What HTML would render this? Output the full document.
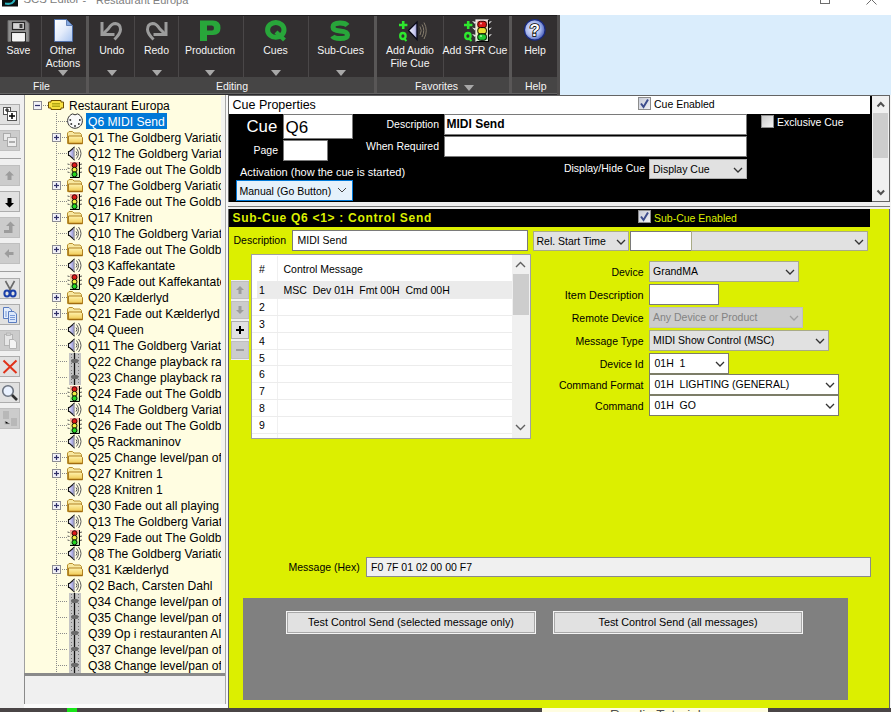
<!DOCTYPE html>
<html><head><meta charset="utf-8">
<style>
*{box-sizing:border-box;margin:0;padding:0}
html,body{width:891px;height:712px;overflow:hidden;background:#fff;font-family:"Liberation Sans",sans-serif;position:relative}
.a{position:absolute}
.t{position:absolute;white-space:pre;line-height:1}
svg{overflow:visible}
</style></head><body>

<div class="a" style="left:0px;top:0px;width:891px;height:15px;background:#fff"></div>
<div class="t" style="left:23.5px;top:-5.57px;font-size:11.3px;color:#808080;font-weight:normal;">SCS Editor</div>
<div class="t" style="left:82.5px;top:-5.31px;font-size:11px;color:#808080;font-weight:normal;">-</div>
<div class="t" style="left:96px;top:-5.31px;font-size:11px;color:#808080;font-weight:normal;">Restaurant Europa</div>
<svg class="a" style="left:2px;top:0px" width="16" height="7" viewBox="0 0 16 7"><rect x="0" y="-2" width="16" height="8.5" fill="#0c0f10"/><path d="M3,3.5 Q12,5 12.5,-1" stroke="#2bb3bf" stroke-width="2.2" fill="none"/></svg>
<div class="a" style="left:820px;top:-6px;width:10px;height:10px;border:1px solid #6d6d6d"></div>
<svg class="a" style="left:866px;top:0px" width="12" height="5" viewBox="0 0 12 5"><path d="M0.5,4.5 L5,0 M6,0 L10.5,4.5" stroke="#6d6d6d" stroke-width="1" fill="none"/></svg>
<div class="a" style="left:560px;top:15px;width:331px;height:80px;background:#daedfc"></div>
<div class="a" style="left:0px;top:15px;width:560px;height:80px;background:#322f30"></div>
<div class="a" style="left:0px;top:15px;width:560px;height:1px;background:#1f1d1e"></div>
<div class="a" style="left:0px;top:77px;width:560px;height:16px;background:#464545"></div>
<div class="a" style="left:0px;top:93px;width:560px;height:1px;background:#646464"></div>
<div class="a" style="left:0px;top:94px;width:560px;height:1px;background:#2b2a2e"></div>
<div class="a" style="left:41px;top:16px;width:1px;height:61px;background:#4a4748"></div>
<div class="a" style="left:134px;top:16px;width:1px;height:61px;background:#4a4748"></div>
<div class="a" style="left:178px;top:16px;width:1px;height:61px;background:#4a4748"></div>
<div class="a" style="left:243px;top:16px;width:1px;height:61px;background:#4a4748"></div>
<div class="a" style="left:308px;top:16px;width:1px;height:61px;background:#4a4748"></div>
<div class="a" style="left:443px;top:16px;width:1px;height:61px;background:#4a4748"></div>
<div class="a" style="left:86px;top:16px;width:3px;height:77px;background:#595757"></div>
<div class="a" style="left:374px;top:16px;width:3px;height:77px;background:#595757"></div>
<div class="a" style="left:509px;top:16px;width:3px;height:77px;background:#595757"></div>
<div class="a" style="left:557px;top:15px;width:3px;height:80px;background:#4f4d4d"></div>
<div class="t" style="left:-181.5px;width:400px;text-align:center;top:44.81px;font-size:10.5px;color:#f4f4f4;font-weight:normal;">Save</div>
<div class="t" style="left:-137px;width:400px;text-align:center;top:44.81px;font-size:10.5px;color:#f4f4f4;font-weight:normal;">Other</div>
<div class="t" style="left:-137px;width:400px;text-align:center;top:57.61px;font-size:10.5px;color:#f4f4f4;font-weight:normal;">Actions</div>
<div class="a" style="left:58px;top:70px;width:0;height:0;border-left:5px solid transparent;border-right:5px solid transparent;border-top:6px solid #a8a8a8"></div>
<div class="t" style="left:-88.2px;width:400px;text-align:center;top:44.81px;font-size:10.5px;color:#f4f4f4;font-weight:normal;">Undo</div>
<div class="a" style="left:107px;top:70px;width:0;height:0;border-left:5px solid transparent;border-right:5px solid transparent;border-top:6px solid #a8a8a8"></div>
<div class="t" style="left:-43.5px;width:400px;text-align:center;top:44.81px;font-size:10.5px;color:#f4f4f4;font-weight:normal;">Redo</div>
<div class="a" style="left:152px;top:70px;width:0;height:0;border-left:5px solid transparent;border-right:5px solid transparent;border-top:6px solid #a8a8a8"></div>
<div class="t" style="left:10px;width:400px;text-align:center;top:44.81px;font-size:10.5px;color:#f4f4f4;font-weight:normal;">Production</div>
<div class="a" style="left:205px;top:70px;width:0;height:0;border-left:5px solid transparent;border-right:5px solid transparent;border-top:6px solid #a8a8a8"></div>
<div class="t" style="left:75.5px;width:400px;text-align:center;top:44.81px;font-size:10.5px;color:#f4f4f4;font-weight:normal;">Cues</div>
<div class="a" style="left:271px;top:70px;width:0;height:0;border-left:5px solid transparent;border-right:5px solid transparent;border-top:6px solid #a8a8a8"></div>
<div class="t" style="left:140.60000000000002px;width:400px;text-align:center;top:44.81px;font-size:10.5px;color:#f4f4f4;font-weight:normal;">Sub-Cues</div>
<div class="a" style="left:336px;top:70px;width:0;height:0;border-left:5px solid transparent;border-right:5px solid transparent;border-top:6px solid #a8a8a8"></div>
<div class="t" style="left:210px;width:400px;text-align:center;top:44.81px;font-size:10.5px;color:#f4f4f4;font-weight:normal;">Add Audio</div>
<div class="t" style="left:210px;width:400px;text-align:center;top:58.11px;font-size:10.5px;color:#f4f4f4;font-weight:normal;">File Cue</div>
<div class="t" style="left:275px;width:400px;text-align:center;top:44.81px;font-size:10.5px;color:#f4f4f4;font-weight:normal;">Add SFR Cue</div>
<div class="t" style="left:335px;width:400px;text-align:center;top:44.81px;font-size:10.5px;color:#f4f4f4;font-weight:normal;">Help</div>
<div class="t" style="left:-158.5px;width:400px;text-align:center;top:80.81px;font-size:10.5px;color:#f4f4f4;font-weight:normal;">File</div>
<div class="t" style="left:32px;width:400px;text-align:center;top:80.81px;font-size:10.5px;color:#f4f4f4;font-weight:normal;">Editing</div>
<div class="t" style="left:236.5px;width:400px;text-align:center;top:80.81px;font-size:10.5px;color:#f4f4f4;font-weight:normal;">Favorites</div>
<div class="a" style="left:464px;top:85px;width:0;height:0;border-left:5px solid transparent;border-right:5px solid transparent;border-top:6px solid #a8a8a8"></div>
<div class="t" style="left:335.70000000000005px;width:400px;text-align:center;top:80.81px;font-size:10.5px;color:#f4f4f4;font-weight:normal;">Help</div>
<svg class="a" style="left:7px;top:20px" width="23" height="22" viewBox="0 0 23 22"><path d="M1,0.5 H19 L22,3.5 V21.5 H1 Z" fill="#8e8e8e" stroke="#6e6e6e"/>
<rect x="5.5" y="2.5" width="12" height="7" fill="#d4d4d4" stroke="#262626" stroke-width="1.2"/>
<rect x="12.5" y="4" width="3" height="4" fill="#3a3a3a"/>
<rect x="4.5" y="12.5" width="14" height="9" fill="#e4e4e4" stroke="#2a2a2a" stroke-width="1"/>
<rect x="5.5" y="13.5" width="12" height="8" fill="#f4f4f4"/></svg>
<svg class="a" style="left:54px;top:19px" width="19" height="23" viewBox="0 0 19 23"><defs><linearGradient id="dg" x1="0" y1="0" x2="1" y2="1"><stop offset="0" stop-color="#ffffff"/><stop offset="0.5" stop-color="#e4ecfb"/><stop offset="1" stop-color="#a8c4f0"/></linearGradient></defs>
<path d="M0.5,0.5 H12.5 L18.5,6.5 V22.5 H0.5 Z" fill="url(#dg)" stroke="#4f6fa8" stroke-width="1"/>
<path d="M12.5,0.5 V6.5 H18.5 Z" fill="#86a9e0" stroke="#4f6fa8" stroke-width="0.8"/></svg>
<svg class="a" style="left:95px;top:17px" width="80" height="28" viewBox="0 0 80 28"><path d="M7,6.5 V17.5 H18" stroke="#9c9c9c" stroke-width="3" fill="none" stroke-linecap="square"/><path d="M8,17 L13.5,11.5 Q16.5,6.5 20.5,6.5 Q25.5,7 25.5,12.5 Q25.5,16.5 19.5,22.5" stroke="#9c9c9c" stroke-width="3" fill="none"/></svg>
<svg class="a" style="left:133px;top:17px" width="80" height="28" viewBox="0 0 80 28"><path d="M33,6.5 V17.5 H22" stroke="#9c9c9c" stroke-width="3" fill="none" stroke-linecap="square"/><path d="M32,17 L26.5,11.5 Q23.5,6.5 19.5,6.5 Q14.5,7 14.5,12.5 Q14.5,16.5 20.5,22.5" stroke="#9c9c9c" stroke-width="3" fill="none"/></svg>
<svg class="a" style="left:200px;top:20px" width="21" height="22" viewBox="0 0 21 22"><path fill-rule="evenodd" fill="#28a63a" d="M0,0.5 H13 Q20.5,0.5 20.5,8 Q20.5,15 13,15 H7 V21 H0 Z M7,5.5 H12 Q14,5.5 14,8 Q14,10.5 12,10.5 H7 Z"/></svg>
<svg class="a" style="left:265px;top:20px" width="23" height="22" viewBox="0 0 23 22"><ellipse cx="10.8" cy="9.9" rx="8.2" ry="7.4" fill="none" stroke="#28a63a" stroke-width="5"/><path d="M11,12 L19.5,20" stroke="#28a63a" stroke-width="4.2"/></svg>
<svg class="a" style="left:330px;top:20px" width="21" height="22" viewBox="0 0 21 22"><path d="M17.5,5.5 Q15.5,3 10,3 Q3,3 3,7 Q3,10.5 10,11 Q17.5,11.5 17.5,15 Q17.5,18.5 10,18.5 Q4,18.5 2.5,16" fill="none" stroke="#28a63a" stroke-width="5"/></svg>
<svg class="a" style="left:399px;top:21px" width="9" height="21" viewBox="0 0 9 21"><path d="M4.2,0 V8 M0,4 H8.4" stroke="#2ee82e" stroke-width="2.6"/><ellipse cx="3.9" cy="15" rx="2.7" ry="3" fill="none" stroke="#2ee82e" stroke-width="2.3"/><path d="M4.5,17 L7.5,20" stroke="#2ee82e" stroke-width="2"/></svg>
<svg class="a" style="left:407px;top:21px" width="22" height="20" viewBox="0 0 22 20"><defs><linearGradient id="sg" x1="0" y1="0" x2="1" y2="0"><stop offset="0" stop-color="#f4f4ff"/><stop offset="0.7" stop-color="#c8c8f0"/><stop offset="1" stop-color="#8888c0"/></linearGradient></defs>
<path d="M1.5,9.5 L10,1 V18.5 Z" fill="url(#sg)" stroke="#0a0a1a" stroke-width="1.3"/>
<path d="M13,5.5 Q15.5,9.5 13,14 M15,3.5 Q18.5,9.5 15,16 M17,1.5 Q21.5,9.5 17,18" stroke="#857c6c" stroke-width="1" fill="none"/></svg>
<svg class="a" style="left:464px;top:21px" width="9" height="21" viewBox="0 0 9 21"><path d="M4.2,0 V8 M0,4 H8.4" stroke="#2ee82e" stroke-width="2.6"/><ellipse cx="3.9" cy="15" rx="2.7" ry="3" fill="none" stroke="#2ee82e" stroke-width="2.3"/><path d="M4.5,17 L7.5,20" stroke="#2ee82e" stroke-width="2"/></svg>
<svg class="a" style="left:472px;top:19px" width="20" height="23" viewBox="0 0 20 23"><defs><linearGradient id="tlb" x1="0" y1="0" x2="0" y2="1"><stop offset="0" stop-color="#f0b0b0"/><stop offset="0.5" stop-color="#f0f0a8"/><stop offset="1" stop-color="#a8e8a8"/></linearGradient></defs>
<path d="M0,2 L4,3 L3,5 Z M0,8.5 L4,9.5 L3,11.5 Z M0,15 L4,16 L3,18 Z M20,2 L16,3 L17,5 Z M20,8.5 L16,9.5 L17,11.5 Z M20,15 L16,16 L17,18 Z" fill="#e8e8e8"/>
<rect x="4" y="1" width="12" height="21" fill="url(#tlb)" stroke="#f4f4f4" stroke-width="1.2"/>
<path d="M16.5,1 V22.5 H4.5" stroke="#000" stroke-width="1.2" fill="none"/>
<rect x="5.8" y="2.3" width="8.6" height="6.4" rx="2.5" fill="#d81818" stroke="#300" stroke-width="1"/>
<rect x="5.8" y="8.6" width="8.6" height="6.4" rx="2.5" fill="#e8e030" stroke="#000" stroke-width="1"/>
<rect x="5.8" y="14.9" width="8.6" height="6.4" rx="2.5" fill="#20c830" stroke="#000" stroke-width="1"/>
<circle cx="9" cy="4.5" r="0.9" fill="#ffb0b0"/><circle cx="9" cy="17" r="0.9" fill="#b0ffb0"/></svg>
<svg class="a" style="left:523px;top:19px" width="24" height="23" viewBox="0 0 24 23"><defs><radialGradient id="hg" cx="0.42" cy="0.45" r="0.65"><stop offset="0" stop-color="#f0f2ff"/><stop offset="0.55" stop-color="#a8b8ec"/><stop offset="1" stop-color="#2a42a8"/></radialGradient></defs>
<circle cx="11.8" cy="10.9" r="10.3" fill="url(#hg)" stroke="#18287a" stroke-width="1.2"/></svg>
<div class="t" style="left:529.5px;top:21.5px;font-size:17px;font-weight:bold;color:#fff;-webkit-text-stroke:1.6px #000;paint-order:stroke fill">?</div>
<div class="a" style="left:0px;top:95px;width:24px;height:613px;background:#f0f0f0"></div>
<div class="a" style="left:0px;top:104px;width:20px;height:21px;background:#e1e1e1;border:1px solid #adadad;border-left:none"></div>
<div class="a" style="left:0px;top:130px;width:20px;height:21px;background:#cccccc;border:1px solid #bfbfbf;border-left:none"></div>
<div class="a" style="left:0px;top:158px;width:21px;height:1px;background:#a0a0a0"></div>
<div class="a" style="left:0px;top:165px;width:20px;height:21px;background:#cccccc;border:1px solid #bfbfbf;border-left:none"></div>
<div class="a" style="left:0px;top:191px;width:20px;height:21px;background:#e1e1e1;border:1px solid #adadad;border-left:none"></div>
<div class="a" style="left:0px;top:217px;width:20px;height:21px;background:#cccccc;border:1px solid #bfbfbf;border-left:none"></div>
<div class="a" style="left:0px;top:243px;width:20px;height:21px;background:#cccccc;border:1px solid #bfbfbf;border-left:none"></div>
<div class="a" style="left:0px;top:271px;width:21px;height:1px;background:#a0a0a0"></div>
<div class="a" style="left:0px;top:278px;width:20px;height:21px;background:#e1e1e1;border:1px solid #adadad;border-left:none"></div>
<div class="a" style="left:0px;top:304px;width:20px;height:21px;background:#e1e1e1;border:1px solid #adadad;border-left:none"></div>
<div class="a" style="left:0px;top:330px;width:20px;height:21px;background:#cccccc;border:1px solid #bfbfbf;border-left:none"></div>
<div class="a" style="left:0px;top:356px;width:20px;height:21px;background:#e1e1e1;border:1px solid #adadad;border-left:none"></div>
<div class="a" style="left:0px;top:382px;width:20px;height:21px;background:#e1e1e1;border:1px solid #adadad;border-left:none"></div>
<div class="a" style="left:0px;top:408px;width:20px;height:21px;background:#cccccc;border:1px solid #bfbfbf;border-left:none"></div>
<svg class="a" style="left:2px;top:106px" width="16" height="16" viewBox="0 0 16 16"><rect x="1.5" y="1.5" width="7" height="7" fill="#fff" stroke="#555"/><rect x="5.5" y="5.5" width="9" height="9" fill="#fff" stroke="#555"/><path d="M3,4 H7 M5,2 V6" stroke="#000"/><path d="M7,10 H13 M10,7 V13" stroke="#000" stroke-width="1.5"/></svg>
<svg class="a" style="left:2px;top:132px" width="16" height="16" viewBox="0 0 16 16"><rect x="1.5" y="1.5" width="7" height="7" fill="#e8e8e8" stroke="#aaa"/><rect x="5.5" y="5.5" width="9" height="9" fill="#eee" stroke="#aaa"/><path d="M7,10 H13" stroke="#999" stroke-width="1.5"/></svg>
<svg class="a" style="left:0px;top:160px" width="24" height="110" viewBox="0 0 24 110"><path d="M9.5,11 L14,15.5 H11.5 V20 H7.5 V15.5 H5 Z" fill="#9c9c9c"/><path d="M9.5,47.5 L14,43 H11.5 V38 H7.5 V43 H5 Z" fill="#000"/><path d="M10.5,61.5 L15,66 H12.5 V73 H4 V70 H9 V66 H6 Z" fill="#9c9c9c"/><path d="M4.5,93.5 L9,89 V92 H13.5 V95 H9 V98 Z" fill="#9c9c9c"/></svg>
<svg class="a" style="left:2px;top:280px" width="16" height="18" viewBox="0 0 16 18"><path d="M3.5,1 L9,11 M12.5,1 L7,11" stroke="#6a6a6a" stroke-width="1.6"/><ellipse cx="5" cy="13.5" rx="2.6" ry="3" fill="none" stroke="#1a3fa8" stroke-width="2"/><ellipse cx="11" cy="13.5" rx="2.6" ry="3" fill="none" stroke="#1a3fa8" stroke-width="2"/></svg>
<svg class="a" style="left:2px;top:306px" width="16" height="18" viewBox="0 0 16 18"><path d="M1.5,1.5 H7 L9.5,4 V12.5 H1.5 Z" fill="#e4eefc" stroke="#5a7cc0"/><path d="M6.5,5.5 H12 L14.5,8 V16.5 H6.5 Z" fill="#dbe7fb" stroke="#5a7cc0"/><path d="M8,9.5 H13 M8,11.5 H13 M8,13.5 H13 M3,6 H5 M3,8 H5 M3,10 H5" stroke="#7a9ad8"/></svg>
<svg class="a" style="left:2px;top:332px" width="16" height="18" viewBox="0 0 16 18"><rect x="2.5" y="2.5" width="8" height="11" fill="#e6e6e6" stroke="#b4b4b4"/><rect x="4.5" y="1" width="4" height="2.5" fill="#d0d0d0" stroke="#b4b4b4" stroke-width="0.8"/><path d="M7.5,7.5 H12 L14.5,10 V16.5 H7.5 Z" fill="#f4f4f4" stroke="#b4b4b4"/></svg>
<svg class="a" style="left:2px;top:358px" width="16" height="18" viewBox="0 0 16 18"><path d="M1.5,2.5 L14.5,15 M14.5,2.5 L1.5,15" stroke="#e0321a" stroke-width="2"/></svg>
<svg class="a" style="left:1px;top:384px" width="18" height="18" viewBox="0 0 18 18"><circle cx="7" cy="7" r="5.3" fill="#eaf2ff" stroke="#6c7480" stroke-width="1.6"/><path d="M11,11 L16,16" stroke="#303030" stroke-width="2.6"/></svg>
<svg class="a" style="left:2px;top:410px" width="16" height="18" viewBox="0 0 16 18"><rect x="1" y="1" width="6" height="8" fill="#b8b8b8"/><rect x="9" y="8" width="6" height="8" fill="#b8b8b8"/><path d="M3,11 V14 H8" stroke="#b8b8b8" stroke-width="1.2"/></svg>
<div class="a" style="left:24px;top:95px;width:201px;height:579px;background:#fffde1;border-left:1px solid #a0a0a0"></div>
<div class="a" style="left:221px;top:96px;width:4px;height:577px;background:#f4f4f0"></div>
<div class="a" style="left:225px;top:95px;width:1px;height:613px;background:#a8a8a8"></div>
<div class="a" style="left:226px;top:95px;width:2px;height:613px;background:#f7f7f7"></div>
<div class="a" style="left:24px;top:673px;width:201px;height:3px;background:#8a8a8a"></div>
<div class="a" style="left:24px;top:676px;width:201px;height:28px;background:#f0f0f0;border-left:1px solid #8a8a8a"></div>
<div class="a" style="left:24px;top:704px;width:204px;height:4px;background:#fbfbfb"></div>
<div class="a" style="left:0px;top:708px;width:891px;height:4px;background:#4a4546"></div>
<div class="a" style="left:67px;top:708px;width:10px;height:4px;background:#19e619"></div>
<div class="a" style="left:25px;top:96px;width:196px;height:577px;overflow:hidden">
<svg class="a" style="left:0;top:0" width="196" height="577"><rect x="31" y="17" width="1" height="1" fill="#8a8a8a"/><rect x="31" y="19" width="1" height="1" fill="#8a8a8a"/><rect x="31" y="21" width="1" height="1" fill="#8a8a8a"/><rect x="31" y="23" width="1" height="1" fill="#8a8a8a"/><rect x="31" y="25" width="1" height="1" fill="#8a8a8a"/><rect x="31" y="27" width="1" height="1" fill="#8a8a8a"/><rect x="31" y="29" width="1" height="1" fill="#8a8a8a"/><rect x="31" y="31" width="1" height="1" fill="#8a8a8a"/><rect x="31" y="33" width="1" height="1" fill="#8a8a8a"/><rect x="31" y="35" width="1" height="1" fill="#8a8a8a"/><rect x="31" y="37" width="1" height="1" fill="#8a8a8a"/><rect x="31" y="39" width="1" height="1" fill="#8a8a8a"/><rect x="31" y="41" width="1" height="1" fill="#8a8a8a"/><rect x="31" y="43" width="1" height="1" fill="#8a8a8a"/><rect x="31" y="45" width="1" height="1" fill="#8a8a8a"/><rect x="31" y="47" width="1" height="1" fill="#8a8a8a"/><rect x="31" y="49" width="1" height="1" fill="#8a8a8a"/><rect x="31" y="51" width="1" height="1" fill="#8a8a8a"/><rect x="31" y="53" width="1" height="1" fill="#8a8a8a"/><rect x="31" y="55" width="1" height="1" fill="#8a8a8a"/><rect x="31" y="57" width="1" height="1" fill="#8a8a8a"/><rect x="31" y="59" width="1" height="1" fill="#8a8a8a"/><rect x="31" y="61" width="1" height="1" fill="#8a8a8a"/><rect x="31" y="63" width="1" height="1" fill="#8a8a8a"/><rect x="31" y="65" width="1" height="1" fill="#8a8a8a"/><rect x="31" y="67" width="1" height="1" fill="#8a8a8a"/><rect x="31" y="69" width="1" height="1" fill="#8a8a8a"/><rect x="31" y="71" width="1" height="1" fill="#8a8a8a"/><rect x="31" y="73" width="1" height="1" fill="#8a8a8a"/><rect x="31" y="75" width="1" height="1" fill="#8a8a8a"/><rect x="31" y="77" width="1" height="1" fill="#8a8a8a"/><rect x="31" y="79" width="1" height="1" fill="#8a8a8a"/><rect x="31" y="81" width="1" height="1" fill="#8a8a8a"/><rect x="31" y="83" width="1" height="1" fill="#8a8a8a"/><rect x="31" y="85" width="1" height="1" fill="#8a8a8a"/><rect x="31" y="87" width="1" height="1" fill="#8a8a8a"/><rect x="31" y="89" width="1" height="1" fill="#8a8a8a"/><rect x="31" y="91" width="1" height="1" fill="#8a8a8a"/><rect x="31" y="93" width="1" height="1" fill="#8a8a8a"/><rect x="31" y="95" width="1" height="1" fill="#8a8a8a"/><rect x="31" y="97" width="1" height="1" fill="#8a8a8a"/><rect x="31" y="99" width="1" height="1" fill="#8a8a8a"/><rect x="31" y="101" width="1" height="1" fill="#8a8a8a"/><rect x="31" y="103" width="1" height="1" fill="#8a8a8a"/><rect x="31" y="105" width="1" height="1" fill="#8a8a8a"/><rect x="31" y="107" width="1" height="1" fill="#8a8a8a"/><rect x="31" y="109" width="1" height="1" fill="#8a8a8a"/><rect x="31" y="111" width="1" height="1" fill="#8a8a8a"/><rect x="31" y="113" width="1" height="1" fill="#8a8a8a"/><rect x="31" y="115" width="1" height="1" fill="#8a8a8a"/><rect x="31" y="117" width="1" height="1" fill="#8a8a8a"/><rect x="31" y="119" width="1" height="1" fill="#8a8a8a"/><rect x="31" y="121" width="1" height="1" fill="#8a8a8a"/><rect x="31" y="123" width="1" height="1" fill="#8a8a8a"/><rect x="31" y="125" width="1" height="1" fill="#8a8a8a"/><rect x="31" y="127" width="1" height="1" fill="#8a8a8a"/><rect x="31" y="129" width="1" height="1" fill="#8a8a8a"/><rect x="31" y="131" width="1" height="1" fill="#8a8a8a"/><rect x="31" y="133" width="1" height="1" fill="#8a8a8a"/><rect x="31" y="135" width="1" height="1" fill="#8a8a8a"/><rect x="31" y="137" width="1" height="1" fill="#8a8a8a"/><rect x="31" y="139" width="1" height="1" fill="#8a8a8a"/><rect x="31" y="141" width="1" height="1" fill="#8a8a8a"/><rect x="31" y="143" width="1" height="1" fill="#8a8a8a"/><rect x="31" y="145" width="1" height="1" fill="#8a8a8a"/><rect x="31" y="147" width="1" height="1" fill="#8a8a8a"/><rect x="31" y="149" width="1" height="1" fill="#8a8a8a"/><rect x="31" y="151" width="1" height="1" fill="#8a8a8a"/><rect x="31" y="153" width="1" height="1" fill="#8a8a8a"/><rect x="31" y="155" width="1" height="1" fill="#8a8a8a"/><rect x="31" y="157" width="1" height="1" fill="#8a8a8a"/><rect x="31" y="159" width="1" height="1" fill="#8a8a8a"/><rect x="31" y="161" width="1" height="1" fill="#8a8a8a"/><rect x="31" y="163" width="1" height="1" fill="#8a8a8a"/><rect x="31" y="165" width="1" height="1" fill="#8a8a8a"/><rect x="31" y="167" width="1" height="1" fill="#8a8a8a"/><rect x="31" y="169" width="1" height="1" fill="#8a8a8a"/><rect x="31" y="171" width="1" height="1" fill="#8a8a8a"/><rect x="31" y="173" width="1" height="1" fill="#8a8a8a"/><rect x="31" y="175" width="1" height="1" fill="#8a8a8a"/><rect x="31" y="177" width="1" height="1" fill="#8a8a8a"/><rect x="31" y="179" width="1" height="1" fill="#8a8a8a"/><rect x="31" y="181" width="1" height="1" fill="#8a8a8a"/><rect x="31" y="183" width="1" height="1" fill="#8a8a8a"/><rect x="31" y="185" width="1" height="1" fill="#8a8a8a"/><rect x="31" y="187" width="1" height="1" fill="#8a8a8a"/><rect x="31" y="189" width="1" height="1" fill="#8a8a8a"/><rect x="31" y="191" width="1" height="1" fill="#8a8a8a"/><rect x="31" y="193" width="1" height="1" fill="#8a8a8a"/><rect x="31" y="195" width="1" height="1" fill="#8a8a8a"/><rect x="31" y="197" width="1" height="1" fill="#8a8a8a"/><rect x="31" y="199" width="1" height="1" fill="#8a8a8a"/><rect x="31" y="201" width="1" height="1" fill="#8a8a8a"/><rect x="31" y="203" width="1" height="1" fill="#8a8a8a"/><rect x="31" y="205" width="1" height="1" fill="#8a8a8a"/><rect x="31" y="207" width="1" height="1" fill="#8a8a8a"/><rect x="31" y="209" width="1" height="1" fill="#8a8a8a"/><rect x="31" y="211" width="1" height="1" fill="#8a8a8a"/><rect x="31" y="213" width="1" height="1" fill="#8a8a8a"/><rect x="31" y="215" width="1" height="1" fill="#8a8a8a"/><rect x="31" y="217" width="1" height="1" fill="#8a8a8a"/><rect x="31" y="219" width="1" height="1" fill="#8a8a8a"/><rect x="31" y="221" width="1" height="1" fill="#8a8a8a"/><rect x="31" y="223" width="1" height="1" fill="#8a8a8a"/><rect x="31" y="225" width="1" height="1" fill="#8a8a8a"/><rect x="31" y="227" width="1" height="1" fill="#8a8a8a"/><rect x="31" y="229" width="1" height="1" fill="#8a8a8a"/><rect x="31" y="231" width="1" height="1" fill="#8a8a8a"/><rect x="31" y="233" width="1" height="1" fill="#8a8a8a"/><rect x="31" y="235" width="1" height="1" fill="#8a8a8a"/><rect x="31" y="237" width="1" height="1" fill="#8a8a8a"/><rect x="31" y="239" width="1" height="1" fill="#8a8a8a"/><rect x="31" y="241" width="1" height="1" fill="#8a8a8a"/><rect x="31" y="243" width="1" height="1" fill="#8a8a8a"/><rect x="31" y="245" width="1" height="1" fill="#8a8a8a"/><rect x="31" y="247" width="1" height="1" fill="#8a8a8a"/><rect x="31" y="249" width="1" height="1" fill="#8a8a8a"/><rect x="31" y="251" width="1" height="1" fill="#8a8a8a"/><rect x="31" y="253" width="1" height="1" fill="#8a8a8a"/><rect x="31" y="255" width="1" height="1" fill="#8a8a8a"/><rect x="31" y="257" width="1" height="1" fill="#8a8a8a"/><rect x="31" y="259" width="1" height="1" fill="#8a8a8a"/><rect x="31" y="261" width="1" height="1" fill="#8a8a8a"/><rect x="31" y="263" width="1" height="1" fill="#8a8a8a"/><rect x="31" y="265" width="1" height="1" fill="#8a8a8a"/><rect x="31" y="267" width="1" height="1" fill="#8a8a8a"/><rect x="31" y="269" width="1" height="1" fill="#8a8a8a"/><rect x="31" y="271" width="1" height="1" fill="#8a8a8a"/><rect x="31" y="273" width="1" height="1" fill="#8a8a8a"/><rect x="31" y="275" width="1" height="1" fill="#8a8a8a"/><rect x="31" y="277" width="1" height="1" fill="#8a8a8a"/><rect x="31" y="279" width="1" height="1" fill="#8a8a8a"/><rect x="31" y="281" width="1" height="1" fill="#8a8a8a"/><rect x="31" y="283" width="1" height="1" fill="#8a8a8a"/><rect x="31" y="285" width="1" height="1" fill="#8a8a8a"/><rect x="31" y="287" width="1" height="1" fill="#8a8a8a"/><rect x="31" y="289" width="1" height="1" fill="#8a8a8a"/><rect x="31" y="291" width="1" height="1" fill="#8a8a8a"/><rect x="31" y="293" width="1" height="1" fill="#8a8a8a"/><rect x="31" y="295" width="1" height="1" fill="#8a8a8a"/><rect x="31" y="297" width="1" height="1" fill="#8a8a8a"/><rect x="31" y="299" width="1" height="1" fill="#8a8a8a"/><rect x="31" y="301" width="1" height="1" fill="#8a8a8a"/><rect x="31" y="303" width="1" height="1" fill="#8a8a8a"/><rect x="31" y="305" width="1" height="1" fill="#8a8a8a"/><rect x="31" y="307" width="1" height="1" fill="#8a8a8a"/><rect x="31" y="309" width="1" height="1" fill="#8a8a8a"/><rect x="31" y="311" width="1" height="1" fill="#8a8a8a"/><rect x="31" y="313" width="1" height="1" fill="#8a8a8a"/><rect x="31" y="315" width="1" height="1" fill="#8a8a8a"/><rect x="31" y="317" width="1" height="1" fill="#8a8a8a"/><rect x="31" y="319" width="1" height="1" fill="#8a8a8a"/><rect x="31" y="321" width="1" height="1" fill="#8a8a8a"/><rect x="31" y="323" width="1" height="1" fill="#8a8a8a"/><rect x="31" y="325" width="1" height="1" fill="#8a8a8a"/><rect x="31" y="327" width="1" height="1" fill="#8a8a8a"/><rect x="31" y="329" width="1" height="1" fill="#8a8a8a"/><rect x="31" y="331" width="1" height="1" fill="#8a8a8a"/><rect x="31" y="333" width="1" height="1" fill="#8a8a8a"/><rect x="31" y="335" width="1" height="1" fill="#8a8a8a"/><rect x="31" y="337" width="1" height="1" fill="#8a8a8a"/><rect x="31" y="339" width="1" height="1" fill="#8a8a8a"/><rect x="31" y="341" width="1" height="1" fill="#8a8a8a"/><rect x="31" y="343" width="1" height="1" fill="#8a8a8a"/><rect x="31" y="345" width="1" height="1" fill="#8a8a8a"/><rect x="31" y="347" width="1" height="1" fill="#8a8a8a"/><rect x="31" y="349" width="1" height="1" fill="#8a8a8a"/><rect x="31" y="351" width="1" height="1" fill="#8a8a8a"/><rect x="31" y="353" width="1" height="1" fill="#8a8a8a"/><rect x="31" y="355" width="1" height="1" fill="#8a8a8a"/><rect x="31" y="357" width="1" height="1" fill="#8a8a8a"/><rect x="31" y="359" width="1" height="1" fill="#8a8a8a"/><rect x="31" y="361" width="1" height="1" fill="#8a8a8a"/><rect x="31" y="363" width="1" height="1" fill="#8a8a8a"/><rect x="31" y="365" width="1" height="1" fill="#8a8a8a"/><rect x="31" y="367" width="1" height="1" fill="#8a8a8a"/><rect x="31" y="369" width="1" height="1" fill="#8a8a8a"/><rect x="31" y="371" width="1" height="1" fill="#8a8a8a"/><rect x="31" y="373" width="1" height="1" fill="#8a8a8a"/><rect x="31" y="375" width="1" height="1" fill="#8a8a8a"/><rect x="31" y="377" width="1" height="1" fill="#8a8a8a"/><rect x="31" y="379" width="1" height="1" fill="#8a8a8a"/><rect x="31" y="381" width="1" height="1" fill="#8a8a8a"/><rect x="31" y="383" width="1" height="1" fill="#8a8a8a"/><rect x="31" y="385" width="1" height="1" fill="#8a8a8a"/><rect x="31" y="387" width="1" height="1" fill="#8a8a8a"/><rect x="31" y="389" width="1" height="1" fill="#8a8a8a"/><rect x="31" y="391" width="1" height="1" fill="#8a8a8a"/><rect x="31" y="393" width="1" height="1" fill="#8a8a8a"/><rect x="31" y="395" width="1" height="1" fill="#8a8a8a"/><rect x="31" y="397" width="1" height="1" fill="#8a8a8a"/><rect x="31" y="399" width="1" height="1" fill="#8a8a8a"/><rect x="31" y="401" width="1" height="1" fill="#8a8a8a"/><rect x="31" y="403" width="1" height="1" fill="#8a8a8a"/><rect x="31" y="405" width="1" height="1" fill="#8a8a8a"/><rect x="31" y="407" width="1" height="1" fill="#8a8a8a"/><rect x="31" y="409" width="1" height="1" fill="#8a8a8a"/><rect x="31" y="411" width="1" height="1" fill="#8a8a8a"/><rect x="31" y="413" width="1" height="1" fill="#8a8a8a"/><rect x="31" y="415" width="1" height="1" fill="#8a8a8a"/><rect x="31" y="417" width="1" height="1" fill="#8a8a8a"/><rect x="31" y="419" width="1" height="1" fill="#8a8a8a"/><rect x="31" y="421" width="1" height="1" fill="#8a8a8a"/><rect x="31" y="423" width="1" height="1" fill="#8a8a8a"/><rect x="31" y="425" width="1" height="1" fill="#8a8a8a"/><rect x="31" y="427" width="1" height="1" fill="#8a8a8a"/><rect x="31" y="429" width="1" height="1" fill="#8a8a8a"/><rect x="31" y="431" width="1" height="1" fill="#8a8a8a"/><rect x="31" y="433" width="1" height="1" fill="#8a8a8a"/><rect x="31" y="435" width="1" height="1" fill="#8a8a8a"/><rect x="31" y="437" width="1" height="1" fill="#8a8a8a"/><rect x="31" y="439" width="1" height="1" fill="#8a8a8a"/><rect x="31" y="441" width="1" height="1" fill="#8a8a8a"/><rect x="31" y="443" width="1" height="1" fill="#8a8a8a"/><rect x="31" y="445" width="1" height="1" fill="#8a8a8a"/><rect x="31" y="447" width="1" height="1" fill="#8a8a8a"/><rect x="31" y="449" width="1" height="1" fill="#8a8a8a"/><rect x="31" y="451" width="1" height="1" fill="#8a8a8a"/><rect x="31" y="453" width="1" height="1" fill="#8a8a8a"/><rect x="31" y="455" width="1" height="1" fill="#8a8a8a"/><rect x="31" y="457" width="1" height="1" fill="#8a8a8a"/><rect x="31" y="459" width="1" height="1" fill="#8a8a8a"/><rect x="31" y="461" width="1" height="1" fill="#8a8a8a"/><rect x="31" y="463" width="1" height="1" fill="#8a8a8a"/><rect x="31" y="465" width="1" height="1" fill="#8a8a8a"/><rect x="31" y="467" width="1" height="1" fill="#8a8a8a"/><rect x="31" y="469" width="1" height="1" fill="#8a8a8a"/><rect x="31" y="471" width="1" height="1" fill="#8a8a8a"/><rect x="31" y="473" width="1" height="1" fill="#8a8a8a"/><rect x="31" y="475" width="1" height="1" fill="#8a8a8a"/><rect x="31" y="477" width="1" height="1" fill="#8a8a8a"/><rect x="31" y="479" width="1" height="1" fill="#8a8a8a"/><rect x="31" y="481" width="1" height="1" fill="#8a8a8a"/><rect x="31" y="483" width="1" height="1" fill="#8a8a8a"/><rect x="31" y="485" width="1" height="1" fill="#8a8a8a"/><rect x="31" y="487" width="1" height="1" fill="#8a8a8a"/><rect x="31" y="489" width="1" height="1" fill="#8a8a8a"/><rect x="31" y="491" width="1" height="1" fill="#8a8a8a"/><rect x="31" y="493" width="1" height="1" fill="#8a8a8a"/><rect x="31" y="495" width="1" height="1" fill="#8a8a8a"/><rect x="31" y="497" width="1" height="1" fill="#8a8a8a"/><rect x="31" y="499" width="1" height="1" fill="#8a8a8a"/><rect x="31" y="501" width="1" height="1" fill="#8a8a8a"/><rect x="31" y="503" width="1" height="1" fill="#8a8a8a"/><rect x="31" y="505" width="1" height="1" fill="#8a8a8a"/><rect x="31" y="507" width="1" height="1" fill="#8a8a8a"/><rect x="31" y="509" width="1" height="1" fill="#8a8a8a"/><rect x="31" y="511" width="1" height="1" fill="#8a8a8a"/><rect x="31" y="513" width="1" height="1" fill="#8a8a8a"/><rect x="31" y="515" width="1" height="1" fill="#8a8a8a"/><rect x="31" y="517" width="1" height="1" fill="#8a8a8a"/><rect x="31" y="519" width="1" height="1" fill="#8a8a8a"/><rect x="31" y="521" width="1" height="1" fill="#8a8a8a"/><rect x="31" y="523" width="1" height="1" fill="#8a8a8a"/><rect x="31" y="525" width="1" height="1" fill="#8a8a8a"/><rect x="31" y="527" width="1" height="1" fill="#8a8a8a"/><rect x="31" y="529" width="1" height="1" fill="#8a8a8a"/><rect x="31" y="531" width="1" height="1" fill="#8a8a8a"/><rect x="31" y="533" width="1" height="1" fill="#8a8a8a"/><rect x="31" y="535" width="1" height="1" fill="#8a8a8a"/><rect x="31" y="537" width="1" height="1" fill="#8a8a8a"/><rect x="31" y="539" width="1" height="1" fill="#8a8a8a"/><rect x="31" y="541" width="1" height="1" fill="#8a8a8a"/><rect x="31" y="543" width="1" height="1" fill="#8a8a8a"/><rect x="31" y="545" width="1" height="1" fill="#8a8a8a"/><rect x="31" y="547" width="1" height="1" fill="#8a8a8a"/><rect x="31" y="549" width="1" height="1" fill="#8a8a8a"/><rect x="31" y="551" width="1" height="1" fill="#8a8a8a"/><rect x="31" y="553" width="1" height="1" fill="#8a8a8a"/><rect x="31" y="555" width="1" height="1" fill="#8a8a8a"/><rect x="31" y="557" width="1" height="1" fill="#8a8a8a"/><rect x="31" y="559" width="1" height="1" fill="#8a8a8a"/><rect x="31" y="561" width="1" height="1" fill="#8a8a8a"/><rect x="31" y="563" width="1" height="1" fill="#8a8a8a"/><rect x="31" y="565" width="1" height="1" fill="#8a8a8a"/><rect x="31" y="567" width="1" height="1" fill="#8a8a8a"/><rect x="31" y="569" width="1" height="1" fill="#8a8a8a"/><rect x="31" y="571" width="1" height="1" fill="#8a8a8a"/><rect x="31" y="573" width="1" height="1" fill="#8a8a8a"/><rect x="31" y="575" width="1" height="1" fill="#8a8a8a"/>
<rect x="18" y="9" width="1" height="1" fill="#8a8a8a"/>
<rect x="20" y="9" width="1" height="1" fill="#8a8a8a"/>
<rect x="22" y="9" width="1" height="1" fill="#8a8a8a"/>
<rect x="33" y="25" width="1" height="1" fill="#8a8a8a"/>
<rect x="35" y="25" width="1" height="1" fill="#8a8a8a"/>
<rect x="37" y="25" width="1" height="1" fill="#8a8a8a"/>
<rect x="39" y="25" width="1" height="1" fill="#8a8a8a"/>
<rect x="41" y="25" width="1" height="1" fill="#8a8a8a"/>
<rect x="33" y="41" width="1" height="1" fill="#8a8a8a"/>
<rect x="35" y="41" width="1" height="1" fill="#8a8a8a"/>
<rect x="37" y="41" width="1" height="1" fill="#8a8a8a"/>
<rect x="39" y="41" width="1" height="1" fill="#8a8a8a"/>
<rect x="41" y="41" width="1" height="1" fill="#8a8a8a"/>
<rect x="33" y="57" width="1" height="1" fill="#8a8a8a"/>
<rect x="35" y="57" width="1" height="1" fill="#8a8a8a"/>
<rect x="37" y="57" width="1" height="1" fill="#8a8a8a"/>
<rect x="39" y="57" width="1" height="1" fill="#8a8a8a"/>
<rect x="41" y="57" width="1" height="1" fill="#8a8a8a"/>
<rect x="33" y="73" width="1" height="1" fill="#8a8a8a"/>
<rect x="35" y="73" width="1" height="1" fill="#8a8a8a"/>
<rect x="37" y="73" width="1" height="1" fill="#8a8a8a"/>
<rect x="39" y="73" width="1" height="1" fill="#8a8a8a"/>
<rect x="41" y="73" width="1" height="1" fill="#8a8a8a"/>
<rect x="33" y="89" width="1" height="1" fill="#8a8a8a"/>
<rect x="35" y="89" width="1" height="1" fill="#8a8a8a"/>
<rect x="37" y="89" width="1" height="1" fill="#8a8a8a"/>
<rect x="39" y="89" width="1" height="1" fill="#8a8a8a"/>
<rect x="41" y="89" width="1" height="1" fill="#8a8a8a"/>
<rect x="33" y="105" width="1" height="1" fill="#8a8a8a"/>
<rect x="35" y="105" width="1" height="1" fill="#8a8a8a"/>
<rect x="37" y="105" width="1" height="1" fill="#8a8a8a"/>
<rect x="39" y="105" width="1" height="1" fill="#8a8a8a"/>
<rect x="41" y="105" width="1" height="1" fill="#8a8a8a"/>
<rect x="33" y="121" width="1" height="1" fill="#8a8a8a"/>
<rect x="35" y="121" width="1" height="1" fill="#8a8a8a"/>
<rect x="37" y="121" width="1" height="1" fill="#8a8a8a"/>
<rect x="39" y="121" width="1" height="1" fill="#8a8a8a"/>
<rect x="41" y="121" width="1" height="1" fill="#8a8a8a"/>
<rect x="33" y="137" width="1" height="1" fill="#8a8a8a"/>
<rect x="35" y="137" width="1" height="1" fill="#8a8a8a"/>
<rect x="37" y="137" width="1" height="1" fill="#8a8a8a"/>
<rect x="39" y="137" width="1" height="1" fill="#8a8a8a"/>
<rect x="41" y="137" width="1" height="1" fill="#8a8a8a"/>
<rect x="33" y="153" width="1" height="1" fill="#8a8a8a"/>
<rect x="35" y="153" width="1" height="1" fill="#8a8a8a"/>
<rect x="37" y="153" width="1" height="1" fill="#8a8a8a"/>
<rect x="39" y="153" width="1" height="1" fill="#8a8a8a"/>
<rect x="41" y="153" width="1" height="1" fill="#8a8a8a"/>
<rect x="33" y="169" width="1" height="1" fill="#8a8a8a"/>
<rect x="35" y="169" width="1" height="1" fill="#8a8a8a"/>
<rect x="37" y="169" width="1" height="1" fill="#8a8a8a"/>
<rect x="39" y="169" width="1" height="1" fill="#8a8a8a"/>
<rect x="41" y="169" width="1" height="1" fill="#8a8a8a"/>
<rect x="33" y="185" width="1" height="1" fill="#8a8a8a"/>
<rect x="35" y="185" width="1" height="1" fill="#8a8a8a"/>
<rect x="37" y="185" width="1" height="1" fill="#8a8a8a"/>
<rect x="39" y="185" width="1" height="1" fill="#8a8a8a"/>
<rect x="41" y="185" width="1" height="1" fill="#8a8a8a"/>
<rect x="33" y="201" width="1" height="1" fill="#8a8a8a"/>
<rect x="35" y="201" width="1" height="1" fill="#8a8a8a"/>
<rect x="37" y="201" width="1" height="1" fill="#8a8a8a"/>
<rect x="39" y="201" width="1" height="1" fill="#8a8a8a"/>
<rect x="41" y="201" width="1" height="1" fill="#8a8a8a"/>
<rect x="33" y="217" width="1" height="1" fill="#8a8a8a"/>
<rect x="35" y="217" width="1" height="1" fill="#8a8a8a"/>
<rect x="37" y="217" width="1" height="1" fill="#8a8a8a"/>
<rect x="39" y="217" width="1" height="1" fill="#8a8a8a"/>
<rect x="41" y="217" width="1" height="1" fill="#8a8a8a"/>
<rect x="33" y="233" width="1" height="1" fill="#8a8a8a"/>
<rect x="35" y="233" width="1" height="1" fill="#8a8a8a"/>
<rect x="37" y="233" width="1" height="1" fill="#8a8a8a"/>
<rect x="39" y="233" width="1" height="1" fill="#8a8a8a"/>
<rect x="41" y="233" width="1" height="1" fill="#8a8a8a"/>
<rect x="33" y="249" width="1" height="1" fill="#8a8a8a"/>
<rect x="35" y="249" width="1" height="1" fill="#8a8a8a"/>
<rect x="37" y="249" width="1" height="1" fill="#8a8a8a"/>
<rect x="39" y="249" width="1" height="1" fill="#8a8a8a"/>
<rect x="41" y="249" width="1" height="1" fill="#8a8a8a"/>
<rect x="33" y="265" width="1" height="1" fill="#8a8a8a"/>
<rect x="35" y="265" width="1" height="1" fill="#8a8a8a"/>
<rect x="37" y="265" width="1" height="1" fill="#8a8a8a"/>
<rect x="39" y="265" width="1" height="1" fill="#8a8a8a"/>
<rect x="41" y="265" width="1" height="1" fill="#8a8a8a"/>
<rect x="33" y="281" width="1" height="1" fill="#8a8a8a"/>
<rect x="35" y="281" width="1" height="1" fill="#8a8a8a"/>
<rect x="37" y="281" width="1" height="1" fill="#8a8a8a"/>
<rect x="39" y="281" width="1" height="1" fill="#8a8a8a"/>
<rect x="41" y="281" width="1" height="1" fill="#8a8a8a"/>
<rect x="33" y="297" width="1" height="1" fill="#8a8a8a"/>
<rect x="35" y="297" width="1" height="1" fill="#8a8a8a"/>
<rect x="37" y="297" width="1" height="1" fill="#8a8a8a"/>
<rect x="39" y="297" width="1" height="1" fill="#8a8a8a"/>
<rect x="41" y="297" width="1" height="1" fill="#8a8a8a"/>
<rect x="33" y="313" width="1" height="1" fill="#8a8a8a"/>
<rect x="35" y="313" width="1" height="1" fill="#8a8a8a"/>
<rect x="37" y="313" width="1" height="1" fill="#8a8a8a"/>
<rect x="39" y="313" width="1" height="1" fill="#8a8a8a"/>
<rect x="41" y="313" width="1" height="1" fill="#8a8a8a"/>
<rect x="33" y="329" width="1" height="1" fill="#8a8a8a"/>
<rect x="35" y="329" width="1" height="1" fill="#8a8a8a"/>
<rect x="37" y="329" width="1" height="1" fill="#8a8a8a"/>
<rect x="39" y="329" width="1" height="1" fill="#8a8a8a"/>
<rect x="41" y="329" width="1" height="1" fill="#8a8a8a"/>
<rect x="33" y="345" width="1" height="1" fill="#8a8a8a"/>
<rect x="35" y="345" width="1" height="1" fill="#8a8a8a"/>
<rect x="37" y="345" width="1" height="1" fill="#8a8a8a"/>
<rect x="39" y="345" width="1" height="1" fill="#8a8a8a"/>
<rect x="41" y="345" width="1" height="1" fill="#8a8a8a"/>
<rect x="33" y="361" width="1" height="1" fill="#8a8a8a"/>
<rect x="35" y="361" width="1" height="1" fill="#8a8a8a"/>
<rect x="37" y="361" width="1" height="1" fill="#8a8a8a"/>
<rect x="39" y="361" width="1" height="1" fill="#8a8a8a"/>
<rect x="41" y="361" width="1" height="1" fill="#8a8a8a"/>
<rect x="33" y="377" width="1" height="1" fill="#8a8a8a"/>
<rect x="35" y="377" width="1" height="1" fill="#8a8a8a"/>
<rect x="37" y="377" width="1" height="1" fill="#8a8a8a"/>
<rect x="39" y="377" width="1" height="1" fill="#8a8a8a"/>
<rect x="41" y="377" width="1" height="1" fill="#8a8a8a"/>
<rect x="33" y="393" width="1" height="1" fill="#8a8a8a"/>
<rect x="35" y="393" width="1" height="1" fill="#8a8a8a"/>
<rect x="37" y="393" width="1" height="1" fill="#8a8a8a"/>
<rect x="39" y="393" width="1" height="1" fill="#8a8a8a"/>
<rect x="41" y="393" width="1" height="1" fill="#8a8a8a"/>
<rect x="33" y="409" width="1" height="1" fill="#8a8a8a"/>
<rect x="35" y="409" width="1" height="1" fill="#8a8a8a"/>
<rect x="37" y="409" width="1" height="1" fill="#8a8a8a"/>
<rect x="39" y="409" width="1" height="1" fill="#8a8a8a"/>
<rect x="41" y="409" width="1" height="1" fill="#8a8a8a"/>
<rect x="33" y="425" width="1" height="1" fill="#8a8a8a"/>
<rect x="35" y="425" width="1" height="1" fill="#8a8a8a"/>
<rect x="37" y="425" width="1" height="1" fill="#8a8a8a"/>
<rect x="39" y="425" width="1" height="1" fill="#8a8a8a"/>
<rect x="41" y="425" width="1" height="1" fill="#8a8a8a"/>
<rect x="33" y="441" width="1" height="1" fill="#8a8a8a"/>
<rect x="35" y="441" width="1" height="1" fill="#8a8a8a"/>
<rect x="37" y="441" width="1" height="1" fill="#8a8a8a"/>
<rect x="39" y="441" width="1" height="1" fill="#8a8a8a"/>
<rect x="41" y="441" width="1" height="1" fill="#8a8a8a"/>
<rect x="33" y="457" width="1" height="1" fill="#8a8a8a"/>
<rect x="35" y="457" width="1" height="1" fill="#8a8a8a"/>
<rect x="37" y="457" width="1" height="1" fill="#8a8a8a"/>
<rect x="39" y="457" width="1" height="1" fill="#8a8a8a"/>
<rect x="41" y="457" width="1" height="1" fill="#8a8a8a"/>
<rect x="33" y="473" width="1" height="1" fill="#8a8a8a"/>
<rect x="35" y="473" width="1" height="1" fill="#8a8a8a"/>
<rect x="37" y="473" width="1" height="1" fill="#8a8a8a"/>
<rect x="39" y="473" width="1" height="1" fill="#8a8a8a"/>
<rect x="41" y="473" width="1" height="1" fill="#8a8a8a"/>
<rect x="33" y="489" width="1" height="1" fill="#8a8a8a"/>
<rect x="35" y="489" width="1" height="1" fill="#8a8a8a"/>
<rect x="37" y="489" width="1" height="1" fill="#8a8a8a"/>
<rect x="39" y="489" width="1" height="1" fill="#8a8a8a"/>
<rect x="41" y="489" width="1" height="1" fill="#8a8a8a"/>
<rect x="33" y="505" width="1" height="1" fill="#8a8a8a"/>
<rect x="35" y="505" width="1" height="1" fill="#8a8a8a"/>
<rect x="37" y="505" width="1" height="1" fill="#8a8a8a"/>
<rect x="39" y="505" width="1" height="1" fill="#8a8a8a"/>
<rect x="41" y="505" width="1" height="1" fill="#8a8a8a"/>
<rect x="33" y="521" width="1" height="1" fill="#8a8a8a"/>
<rect x="35" y="521" width="1" height="1" fill="#8a8a8a"/>
<rect x="37" y="521" width="1" height="1" fill="#8a8a8a"/>
<rect x="39" y="521" width="1" height="1" fill="#8a8a8a"/>
<rect x="41" y="521" width="1" height="1" fill="#8a8a8a"/>
<rect x="33" y="537" width="1" height="1" fill="#8a8a8a"/>
<rect x="35" y="537" width="1" height="1" fill="#8a8a8a"/>
<rect x="37" y="537" width="1" height="1" fill="#8a8a8a"/>
<rect x="39" y="537" width="1" height="1" fill="#8a8a8a"/>
<rect x="41" y="537" width="1" height="1" fill="#8a8a8a"/>
<rect x="33" y="553" width="1" height="1" fill="#8a8a8a"/>
<rect x="35" y="553" width="1" height="1" fill="#8a8a8a"/>
<rect x="37" y="553" width="1" height="1" fill="#8a8a8a"/>
<rect x="39" y="553" width="1" height="1" fill="#8a8a8a"/>
<rect x="41" y="553" width="1" height="1" fill="#8a8a8a"/>
<rect x="33" y="569" width="1" height="1" fill="#8a8a8a"/>
<rect x="35" y="569" width="1" height="1" fill="#8a8a8a"/>
<rect x="37" y="569" width="1" height="1" fill="#8a8a8a"/>
<rect x="39" y="569" width="1" height="1" fill="#8a8a8a"/>
<rect x="41" y="569" width="1" height="1" fill="#8a8a8a"/>
</svg>
<svg width="0" height="0" style="position:absolute"><defs><linearGradient id="fg" x1="0" y1="0" x2="0" y2="1"><stop offset="0" stop-color="#fff4b0"/><stop offset="1" stop-color="#f0c850"/></linearGradient><linearGradient id="sp" x1="0" y1="0" x2="1" y2="0"><stop offset="0" stop-color="#f4f4ff"/><stop offset="1" stop-color="#8c8cd8"/></linearGradient><linearGradient id="tlg" x1="0" y1="0" x2="0" y2="1"><stop offset="0" stop-color="#f4a0a0"/><stop offset="0.5" stop-color="#f4f0a0"/><stop offset="1" stop-color="#a0e8a0"/></linearGradient></defs></svg>
<svg class="a" style="left:8px;top:5px" width="9" height="9" viewBox="0 0 9 9"><rect x="0.5" y="0.5" width="8" height="8" fill="#f2f2f8" stroke="#8c8c94"/><path d="M2,4.5 H7" stroke="#30306a" stroke-width="1.2"/></svg>
<svg class="a" style="left:23px;top:4px" width="16" height="10" viewBox="0 0 16 10"><path d="M3,0.5 H13 V2 H15.5 V8 H13 V9.5 H3 V8 H0.5 V2 H3 Z" fill="#f8e040" stroke="#705000" stroke-width="1"/><path d="M4,3.5 H12 M4,5 H12 M4,6.5 H12" stroke="#a8a010" stroke-width="0.9"/></svg>
<div class="t" style="left:44px;top:3.84px;font-size:12px;color:#000;font-weight:normal;">Restaurant Europa</div>
<svg class="a" style="left:42px;top:17px" width="16" height="16" viewBox="0 0 16 16"><path d="M5.5,0.9 Q8,2.8 10.5,0.9 A7.4,7.4 0 1 1 5.5,0.9 Z" fill="#fafafa" stroke="#333" stroke-width="1"/><rect x="2.5" y="6.2" width="1.6" height="1.6" fill="#222"/><rect x="12" y="6.2" width="1.6" height="1.6" fill="#222"/><rect x="3.5" y="10.2" width="1.6" height="1.6" fill="#222"/><rect x="11" y="10.2" width="1.6" height="1.6" fill="#222"/><rect x="7.2" y="12.2" width="1.6" height="1.6" fill="#222"/></svg>
<div class="a" style="left:61px;top:17px;width:81px;height:16px;background:#0078d7"></div>
<div class="t" style="left:63px;top:19.76px;font-size:12.1px;color:#fff;font-weight:normal;">Q6 MIDI Send</div>
<svg class="a" style="left:27px;top:37px" width="9" height="9" viewBox="0 0 9 9"><rect x="0.5" y="0.5" width="8" height="8" fill="#f2f2f8" stroke="#8c8c94"/><path d="M2,4.5 H7" stroke="#30306a" stroke-width="1.2"/><path d="M4.5,2 V7" stroke="#30306a" stroke-width="1.2"/></svg>
<svg class="a" style="left:42px;top:35px" width="16" height="13" viewBox="0 0 16 13"><path d="M0.5,12.5 V2 L2,0.5 H5.5 L7,2 H13 L14.5,3.5 V12.5 Z" fill="#f8e8a0" stroke="#b89030" stroke-width="1"/><path d="M1.5,12.5 V5 H14 L15.5,6.5 V12.5 Z" fill="url(#fg)" stroke="#b08020" stroke-width="1"/><path d="M1.5,12.5 H15.5" stroke="#a06c10" stroke-width="1.5"/></svg>
<div class="t" style="left:63px;top:35.76px;font-size:12.1px;color:#000;font-weight:normal;">Q1 The Goldberg Variations</div>
<svg class="a" style="left:43px;top:51px" width="14" height="13" viewBox="0 0 14 13"><path d="M0.5,4.5 H1.5 L6,0.5 V12.5 L1.5,8.5 H0.5 Z" fill="url(#sp)" stroke="#111" stroke-width="1.1"/><path d="M6,1 V12" stroke="#e8e8ff" stroke-width="1"/><path d="M8,4.5 Q10,6.5 8,8.5 M8.5,1.5 Q12.5,6.5 8.5,11.5 M10.5,0 Q15.5,6.5 10.5,13" stroke="#5a5a5a" stroke-width="1" fill="none"/></svg>
<div class="t" style="left:63px;top:51.76px;font-size:12.1px;color:#000;font-weight:normal;">Q12 The Goldberg Variations</div>
<svg class="a" style="left:42px;top:66px" width="15" height="16" viewBox="0 0 15 16"><rect x="3" y="0" width="9" height="15" fill="url(#tlg)"/><path d="M12.5,0 V15.5 H3" stroke="#000" stroke-width="1" fill="none"/><circle cx="7.5" cy="3.2" r="2.5" fill="#e01818" stroke="#200" stroke-width="0.9"/><circle cx="7.5" cy="7.8" r="2.5" fill="#f0f040" stroke="#000" stroke-width="0.9"/><circle cx="7.5" cy="12.3" r="2.5" fill="#20d820" stroke="#000" stroke-width="0.9"/><path d="M0.5,2 L2.5,2.5 M0.5,6 L2.5,6.5 M0.5,10 L2.5,10.5 M13,2.5 L15,2 M13,6.5 L15,6 M13,10.5 L15,10" stroke="#444" stroke-width="0.9"/></svg>
<div class="t" style="left:63px;top:67.76px;font-size:12.1px;color:#000;font-weight:normal;">Q19 Fade out The Goldberg</div>
<svg class="a" style="left:27px;top:85px" width="9" height="9" viewBox="0 0 9 9"><rect x="0.5" y="0.5" width="8" height="8" fill="#f2f2f8" stroke="#8c8c94"/><path d="M2,4.5 H7" stroke="#30306a" stroke-width="1.2"/><path d="M4.5,2 V7" stroke="#30306a" stroke-width="1.2"/></svg>
<svg class="a" style="left:42px;top:83px" width="16" height="13" viewBox="0 0 16 13"><path d="M0.5,12.5 V2 L2,0.5 H5.5 L7,2 H13 L14.5,3.5 V12.5 Z" fill="#f8e8a0" stroke="#b89030" stroke-width="1"/><path d="M1.5,12.5 V5 H14 L15.5,6.5 V12.5 Z" fill="url(#fg)" stroke="#b08020" stroke-width="1"/><path d="M1.5,12.5 H15.5" stroke="#a06c10" stroke-width="1.5"/></svg>
<div class="t" style="left:63px;top:83.76px;font-size:12.1px;color:#000;font-weight:normal;">Q7 The Goldberg Variations</div>
<svg class="a" style="left:42px;top:98px" width="15" height="16" viewBox="0 0 15 16"><rect x="3" y="0" width="9" height="15" fill="url(#tlg)"/><path d="M12.5,0 V15.5 H3" stroke="#000" stroke-width="1" fill="none"/><circle cx="7.5" cy="3.2" r="2.5" fill="#e01818" stroke="#200" stroke-width="0.9"/><circle cx="7.5" cy="7.8" r="2.5" fill="#f0f040" stroke="#000" stroke-width="0.9"/><circle cx="7.5" cy="12.3" r="2.5" fill="#20d820" stroke="#000" stroke-width="0.9"/><path d="M0.5,2 L2.5,2.5 M0.5,6 L2.5,6.5 M0.5,10 L2.5,10.5 M13,2.5 L15,2 M13,6.5 L15,6 M13,10.5 L15,10" stroke="#444" stroke-width="0.9"/></svg>
<div class="t" style="left:63px;top:99.76px;font-size:12.1px;color:#000;font-weight:normal;">Q16 Fade out The Goldberg</div>
<svg class="a" style="left:27px;top:117px" width="9" height="9" viewBox="0 0 9 9"><rect x="0.5" y="0.5" width="8" height="8" fill="#f2f2f8" stroke="#8c8c94"/><path d="M2,4.5 H7" stroke="#30306a" stroke-width="1.2"/><path d="M4.5,2 V7" stroke="#30306a" stroke-width="1.2"/></svg>
<svg class="a" style="left:42px;top:115px" width="16" height="13" viewBox="0 0 16 13"><path d="M0.5,12.5 V2 L2,0.5 H5.5 L7,2 H13 L14.5,3.5 V12.5 Z" fill="#f8e8a0" stroke="#b89030" stroke-width="1"/><path d="M1.5,12.5 V5 H14 L15.5,6.5 V12.5 Z" fill="url(#fg)" stroke="#b08020" stroke-width="1"/><path d="M1.5,12.5 H15.5" stroke="#a06c10" stroke-width="1.5"/></svg>
<div class="t" style="left:63px;top:115.76px;font-size:12.1px;color:#000;font-weight:normal;">Q17 Knitren</div>
<svg class="a" style="left:43px;top:131px" width="14" height="13" viewBox="0 0 14 13"><path d="M0.5,4.5 H1.5 L6,0.5 V12.5 L1.5,8.5 H0.5 Z" fill="url(#sp)" stroke="#111" stroke-width="1.1"/><path d="M6,1 V12" stroke="#e8e8ff" stroke-width="1"/><path d="M8,4.5 Q10,6.5 8,8.5 M8.5,1.5 Q12.5,6.5 8.5,11.5 M10.5,0 Q15.5,6.5 10.5,13" stroke="#5a5a5a" stroke-width="1" fill="none"/></svg>
<div class="t" style="left:63px;top:131.76px;font-size:12.1px;color:#000;font-weight:normal;">Q10 The Goldberg Variations</div>
<svg class="a" style="left:27px;top:149px" width="9" height="9" viewBox="0 0 9 9"><rect x="0.5" y="0.5" width="8" height="8" fill="#f2f2f8" stroke="#8c8c94"/><path d="M2,4.5 H7" stroke="#30306a" stroke-width="1.2"/><path d="M4.5,2 V7" stroke="#30306a" stroke-width="1.2"/></svg>
<svg class="a" style="left:42px;top:147px" width="16" height="13" viewBox="0 0 16 13"><path d="M0.5,12.5 V2 L2,0.5 H5.5 L7,2 H13 L14.5,3.5 V12.5 Z" fill="#f8e8a0" stroke="#b89030" stroke-width="1"/><path d="M1.5,12.5 V5 H14 L15.5,6.5 V12.5 Z" fill="url(#fg)" stroke="#b08020" stroke-width="1"/><path d="M1.5,12.5 H15.5" stroke="#a06c10" stroke-width="1.5"/></svg>
<div class="t" style="left:63px;top:147.76px;font-size:12.1px;color:#000;font-weight:normal;">Q18 Fade out The Goldberg</div>
<svg class="a" style="left:43px;top:163px" width="14" height="13" viewBox="0 0 14 13"><path d="M0.5,4.5 H1.5 L6,0.5 V12.5 L1.5,8.5 H0.5 Z" fill="url(#sp)" stroke="#111" stroke-width="1.1"/><path d="M6,1 V12" stroke="#e8e8ff" stroke-width="1"/><path d="M8,4.5 Q10,6.5 8,8.5 M8.5,1.5 Q12.5,6.5 8.5,11.5 M10.5,0 Q15.5,6.5 10.5,13" stroke="#5a5a5a" stroke-width="1" fill="none"/></svg>
<div class="t" style="left:63px;top:163.76px;font-size:12.1px;color:#000;font-weight:normal;">Q3 Kaffekantate</div>
<svg class="a" style="left:42px;top:178px" width="15" height="16" viewBox="0 0 15 16"><rect x="3" y="0" width="9" height="15" fill="url(#tlg)"/><path d="M12.5,0 V15.5 H3" stroke="#000" stroke-width="1" fill="none"/><circle cx="7.5" cy="3.2" r="2.5" fill="#e01818" stroke="#200" stroke-width="0.9"/><circle cx="7.5" cy="7.8" r="2.5" fill="#f0f040" stroke="#000" stroke-width="0.9"/><circle cx="7.5" cy="12.3" r="2.5" fill="#20d820" stroke="#000" stroke-width="0.9"/><path d="M0.5,2 L2.5,2.5 M0.5,6 L2.5,6.5 M0.5,10 L2.5,10.5 M13,2.5 L15,2 M13,6.5 L15,6 M13,10.5 L15,10" stroke="#444" stroke-width="0.9"/></svg>
<div class="t" style="left:63px;top:179.76px;font-size:12.1px;color:#000;font-weight:normal;">Q9 Fade out Kaffekantate</div>
<svg class="a" style="left:27px;top:197px" width="9" height="9" viewBox="0 0 9 9"><rect x="0.5" y="0.5" width="8" height="8" fill="#f2f2f8" stroke="#8c8c94"/><path d="M2,4.5 H7" stroke="#30306a" stroke-width="1.2"/><path d="M4.5,2 V7" stroke="#30306a" stroke-width="1.2"/></svg>
<svg class="a" style="left:42px;top:195px" width="16" height="13" viewBox="0 0 16 13"><path d="M0.5,12.5 V2 L2,0.5 H5.5 L7,2 H13 L14.5,3.5 V12.5 Z" fill="#f8e8a0" stroke="#b89030" stroke-width="1"/><path d="M1.5,12.5 V5 H14 L15.5,6.5 V12.5 Z" fill="url(#fg)" stroke="#b08020" stroke-width="1"/><path d="M1.5,12.5 H15.5" stroke="#a06c10" stroke-width="1.5"/></svg>
<div class="t" style="left:63px;top:195.76px;font-size:12.1px;color:#000;font-weight:normal;">Q20 Kælderlyd</div>
<svg class="a" style="left:27px;top:213px" width="9" height="9" viewBox="0 0 9 9"><rect x="0.5" y="0.5" width="8" height="8" fill="#f2f2f8" stroke="#8c8c94"/><path d="M2,4.5 H7" stroke="#30306a" stroke-width="1.2"/><path d="M4.5,2 V7" stroke="#30306a" stroke-width="1.2"/></svg>
<svg class="a" style="left:42px;top:211px" width="16" height="13" viewBox="0 0 16 13"><path d="M0.5,12.5 V2 L2,0.5 H5.5 L7,2 H13 L14.5,3.5 V12.5 Z" fill="#f8e8a0" stroke="#b89030" stroke-width="1"/><path d="M1.5,12.5 V5 H14 L15.5,6.5 V12.5 Z" fill="url(#fg)" stroke="#b08020" stroke-width="1"/><path d="M1.5,12.5 H15.5" stroke="#a06c10" stroke-width="1.5"/></svg>
<div class="t" style="left:63px;top:211.76px;font-size:12.1px;color:#000;font-weight:normal;">Q21 Fade out Kælderlyd</div>
<svg class="a" style="left:43px;top:227px" width="14" height="13" viewBox="0 0 14 13"><path d="M0.5,4.5 H1.5 L6,0.5 V12.5 L1.5,8.5 H0.5 Z" fill="url(#sp)" stroke="#111" stroke-width="1.1"/><path d="M6,1 V12" stroke="#e8e8ff" stroke-width="1"/><path d="M8,4.5 Q10,6.5 8,8.5 M8.5,1.5 Q12.5,6.5 8.5,11.5 M10.5,0 Q15.5,6.5 10.5,13" stroke="#5a5a5a" stroke-width="1" fill="none"/></svg>
<div class="t" style="left:63px;top:227.76px;font-size:12.1px;color:#000;font-weight:normal;">Q4 Queen</div>
<svg class="a" style="left:43px;top:243px" width="14" height="13" viewBox="0 0 14 13"><path d="M0.5,4.5 H1.5 L6,0.5 V12.5 L1.5,8.5 H0.5 Z" fill="url(#sp)" stroke="#111" stroke-width="1.1"/><path d="M6,1 V12" stroke="#e8e8ff" stroke-width="1"/><path d="M8,4.5 Q10,6.5 8,8.5 M8.5,1.5 Q12.5,6.5 8.5,11.5 M10.5,0 Q15.5,6.5 10.5,13" stroke="#5a5a5a" stroke-width="1" fill="none"/></svg>
<div class="t" style="left:63px;top:243.76px;font-size:12.1px;color:#000;font-weight:normal;">Q11 The Goldberg Variations</div>
<svg class="a" style="left:44px;top:257px" width="12" height="16" viewBox="0 0 12 16"><rect x="0" y="0" width="12" height="16" fill="#c4c4c4"/><path d="M2.5,1 V16 M9.5,1 V16" stroke="#777" stroke-dasharray="1,2"/><path d="M5.5,0 V16" stroke="#111" stroke-width="1.3"/><rect x="2" y="6" width="7.5" height="4" rx="2" fill="#6a6a6a"/></svg>
<div class="t" style="left:63px;top:259.76px;font-size:12.1px;color:#000;font-weight:normal;">Q22 Change playback rate</div>
<svg class="a" style="left:44px;top:273px" width="12" height="16" viewBox="0 0 12 16"><rect x="0" y="0" width="12" height="16" fill="#c4c4c4"/><path d="M2.5,1 V16 M9.5,1 V16" stroke="#777" stroke-dasharray="1,2"/><path d="M5.5,0 V16" stroke="#111" stroke-width="1.3"/><rect x="2" y="6" width="7.5" height="4" rx="2" fill="#6a6a6a"/></svg>
<div class="t" style="left:63px;top:275.76px;font-size:12.1px;color:#000;font-weight:normal;">Q23 Change playback rate</div>
<svg class="a" style="left:42px;top:290px" width="15" height="16" viewBox="0 0 15 16"><rect x="3" y="0" width="9" height="15" fill="url(#tlg)"/><path d="M12.5,0 V15.5 H3" stroke="#000" stroke-width="1" fill="none"/><circle cx="7.5" cy="3.2" r="2.5" fill="#e01818" stroke="#200" stroke-width="0.9"/><circle cx="7.5" cy="7.8" r="2.5" fill="#f0f040" stroke="#000" stroke-width="0.9"/><circle cx="7.5" cy="12.3" r="2.5" fill="#20d820" stroke="#000" stroke-width="0.9"/><path d="M0.5,2 L2.5,2.5 M0.5,6 L2.5,6.5 M0.5,10 L2.5,10.5 M13,2.5 L15,2 M13,6.5 L15,6 M13,10.5 L15,10" stroke="#444" stroke-width="0.9"/></svg>
<div class="t" style="left:63px;top:291.76px;font-size:12.1px;color:#000;font-weight:normal;">Q24 Fade out The Goldberg</div>
<svg class="a" style="left:43px;top:307px" width="14" height="13" viewBox="0 0 14 13"><path d="M0.5,4.5 H1.5 L6,0.5 V12.5 L1.5,8.5 H0.5 Z" fill="url(#sp)" stroke="#111" stroke-width="1.1"/><path d="M6,1 V12" stroke="#e8e8ff" stroke-width="1"/><path d="M8,4.5 Q10,6.5 8,8.5 M8.5,1.5 Q12.5,6.5 8.5,11.5 M10.5,0 Q15.5,6.5 10.5,13" stroke="#5a5a5a" stroke-width="1" fill="none"/></svg>
<div class="t" style="left:63px;top:307.76px;font-size:12.1px;color:#000;font-weight:normal;">Q14 The Goldberg Variations</div>
<svg class="a" style="left:42px;top:322px" width="15" height="16" viewBox="0 0 15 16"><rect x="3" y="0" width="9" height="15" fill="url(#tlg)"/><path d="M12.5,0 V15.5 H3" stroke="#000" stroke-width="1" fill="none"/><circle cx="7.5" cy="3.2" r="2.5" fill="#e01818" stroke="#200" stroke-width="0.9"/><circle cx="7.5" cy="7.8" r="2.5" fill="#f0f040" stroke="#000" stroke-width="0.9"/><circle cx="7.5" cy="12.3" r="2.5" fill="#20d820" stroke="#000" stroke-width="0.9"/><path d="M0.5,2 L2.5,2.5 M0.5,6 L2.5,6.5 M0.5,10 L2.5,10.5 M13,2.5 L15,2 M13,6.5 L15,6 M13,10.5 L15,10" stroke="#444" stroke-width="0.9"/></svg>
<div class="t" style="left:63px;top:323.76px;font-size:12.1px;color:#000;font-weight:normal;">Q26 Fade out The Goldberg</div>
<svg class="a" style="left:43px;top:339px" width="14" height="13" viewBox="0 0 14 13"><path d="M0.5,4.5 H1.5 L6,0.5 V12.5 L1.5,8.5 H0.5 Z" fill="url(#sp)" stroke="#111" stroke-width="1.1"/><path d="M6,1 V12" stroke="#e8e8ff" stroke-width="1"/><path d="M8,4.5 Q10,6.5 8,8.5 M8.5,1.5 Q12.5,6.5 8.5,11.5 M10.5,0 Q15.5,6.5 10.5,13" stroke="#5a5a5a" stroke-width="1" fill="none"/></svg>
<div class="t" style="left:63px;top:339.76px;font-size:12.1px;color:#000;font-weight:normal;">Q5 Rackmaninov</div>
<svg class="a" style="left:27px;top:357px" width="9" height="9" viewBox="0 0 9 9"><rect x="0.5" y="0.5" width="8" height="8" fill="#f2f2f8" stroke="#8c8c94"/><path d="M2,4.5 H7" stroke="#30306a" stroke-width="1.2"/><path d="M4.5,2 V7" stroke="#30306a" stroke-width="1.2"/></svg>
<svg class="a" style="left:42px;top:355px" width="16" height="13" viewBox="0 0 16 13"><path d="M0.5,12.5 V2 L2,0.5 H5.5 L7,2 H13 L14.5,3.5 V12.5 Z" fill="#f8e8a0" stroke="#b89030" stroke-width="1"/><path d="M1.5,12.5 V5 H14 L15.5,6.5 V12.5 Z" fill="url(#fg)" stroke="#b08020" stroke-width="1"/><path d="M1.5,12.5 H15.5" stroke="#a06c10" stroke-width="1.5"/></svg>
<div class="t" style="left:63px;top:355.76px;font-size:12.1px;color:#000;font-weight:normal;">Q25 Change level/pan of</div>
<svg class="a" style="left:27px;top:373px" width="9" height="9" viewBox="0 0 9 9"><rect x="0.5" y="0.5" width="8" height="8" fill="#f2f2f8" stroke="#8c8c94"/><path d="M2,4.5 H7" stroke="#30306a" stroke-width="1.2"/><path d="M4.5,2 V7" stroke="#30306a" stroke-width="1.2"/></svg>
<svg class="a" style="left:42px;top:371px" width="16" height="13" viewBox="0 0 16 13"><path d="M0.5,12.5 V2 L2,0.5 H5.5 L7,2 H13 L14.5,3.5 V12.5 Z" fill="#f8e8a0" stroke="#b89030" stroke-width="1"/><path d="M1.5,12.5 V5 H14 L15.5,6.5 V12.5 Z" fill="url(#fg)" stroke="#b08020" stroke-width="1"/><path d="M1.5,12.5 H15.5" stroke="#a06c10" stroke-width="1.5"/></svg>
<div class="t" style="left:63px;top:371.76px;font-size:12.1px;color:#000;font-weight:normal;">Q27 Knitren 1</div>
<svg class="a" style="left:43px;top:387px" width="14" height="13" viewBox="0 0 14 13"><path d="M0.5,4.5 H1.5 L6,0.5 V12.5 L1.5,8.5 H0.5 Z" fill="url(#sp)" stroke="#111" stroke-width="1.1"/><path d="M6,1 V12" stroke="#e8e8ff" stroke-width="1"/><path d="M8,4.5 Q10,6.5 8,8.5 M8.5,1.5 Q12.5,6.5 8.5,11.5 M10.5,0 Q15.5,6.5 10.5,13" stroke="#5a5a5a" stroke-width="1" fill="none"/></svg>
<div class="t" style="left:63px;top:387.76px;font-size:12.1px;color:#000;font-weight:normal;">Q28 Knitren 1</div>
<svg class="a" style="left:27px;top:405px" width="9" height="9" viewBox="0 0 9 9"><rect x="0.5" y="0.5" width="8" height="8" fill="#f2f2f8" stroke="#8c8c94"/><path d="M2,4.5 H7" stroke="#30306a" stroke-width="1.2"/><path d="M4.5,2 V7" stroke="#30306a" stroke-width="1.2"/></svg>
<svg class="a" style="left:42px;top:403px" width="16" height="13" viewBox="0 0 16 13"><path d="M0.5,12.5 V2 L2,0.5 H5.5 L7,2 H13 L14.5,3.5 V12.5 Z" fill="#f8e8a0" stroke="#b89030" stroke-width="1"/><path d="M1.5,12.5 V5 H14 L15.5,6.5 V12.5 Z" fill="url(#fg)" stroke="#b08020" stroke-width="1"/><path d="M1.5,12.5 H15.5" stroke="#a06c10" stroke-width="1.5"/></svg>
<div class="t" style="left:63px;top:403.76px;font-size:12.1px;color:#000;font-weight:normal;">Q30 Fade out all playing</div>
<svg class="a" style="left:43px;top:419px" width="14" height="13" viewBox="0 0 14 13"><path d="M0.5,4.5 H1.5 L6,0.5 V12.5 L1.5,8.5 H0.5 Z" fill="url(#sp)" stroke="#111" stroke-width="1.1"/><path d="M6,1 V12" stroke="#e8e8ff" stroke-width="1"/><path d="M8,4.5 Q10,6.5 8,8.5 M8.5,1.5 Q12.5,6.5 8.5,11.5 M10.5,0 Q15.5,6.5 10.5,13" stroke="#5a5a5a" stroke-width="1" fill="none"/></svg>
<div class="t" style="left:63px;top:419.76px;font-size:12.1px;color:#000;font-weight:normal;">Q13 The Goldberg Variations</div>
<svg class="a" style="left:42px;top:434px" width="15" height="16" viewBox="0 0 15 16"><rect x="3" y="0" width="9" height="15" fill="url(#tlg)"/><path d="M12.5,0 V15.5 H3" stroke="#000" stroke-width="1" fill="none"/><circle cx="7.5" cy="3.2" r="2.5" fill="#e01818" stroke="#200" stroke-width="0.9"/><circle cx="7.5" cy="7.8" r="2.5" fill="#f0f040" stroke="#000" stroke-width="0.9"/><circle cx="7.5" cy="12.3" r="2.5" fill="#20d820" stroke="#000" stroke-width="0.9"/><path d="M0.5,2 L2.5,2.5 M0.5,6 L2.5,6.5 M0.5,10 L2.5,10.5 M13,2.5 L15,2 M13,6.5 L15,6 M13,10.5 L15,10" stroke="#444" stroke-width="0.9"/></svg>
<div class="t" style="left:63px;top:435.76px;font-size:12.1px;color:#000;font-weight:normal;">Q29 Fade out The Goldberg</div>
<svg class="a" style="left:43px;top:451px" width="14" height="13" viewBox="0 0 14 13"><path d="M0.5,4.5 H1.5 L6,0.5 V12.5 L1.5,8.5 H0.5 Z" fill="url(#sp)" stroke="#111" stroke-width="1.1"/><path d="M6,1 V12" stroke="#e8e8ff" stroke-width="1"/><path d="M8,4.5 Q10,6.5 8,8.5 M8.5,1.5 Q12.5,6.5 8.5,11.5 M10.5,0 Q15.5,6.5 10.5,13" stroke="#5a5a5a" stroke-width="1" fill="none"/></svg>
<div class="t" style="left:63px;top:451.76px;font-size:12.1px;color:#000;font-weight:normal;">Q8 The Goldberg Variations</div>
<svg class="a" style="left:27px;top:469px" width="9" height="9" viewBox="0 0 9 9"><rect x="0.5" y="0.5" width="8" height="8" fill="#f2f2f8" stroke="#8c8c94"/><path d="M2,4.5 H7" stroke="#30306a" stroke-width="1.2"/><path d="M4.5,2 V7" stroke="#30306a" stroke-width="1.2"/></svg>
<svg class="a" style="left:42px;top:467px" width="16" height="13" viewBox="0 0 16 13"><path d="M0.5,12.5 V2 L2,0.5 H5.5 L7,2 H13 L14.5,3.5 V12.5 Z" fill="#f8e8a0" stroke="#b89030" stroke-width="1"/><path d="M1.5,12.5 V5 H14 L15.5,6.5 V12.5 Z" fill="url(#fg)" stroke="#b08020" stroke-width="1"/><path d="M1.5,12.5 H15.5" stroke="#a06c10" stroke-width="1.5"/></svg>
<div class="t" style="left:63px;top:467.76px;font-size:12.1px;color:#000;font-weight:normal;">Q31 Kælderlyd</div>
<svg class="a" style="left:43px;top:483px" width="14" height="13" viewBox="0 0 14 13"><path d="M0.5,4.5 H1.5 L6,0.5 V12.5 L1.5,8.5 H0.5 Z" fill="url(#sp)" stroke="#111" stroke-width="1.1"/><path d="M6,1 V12" stroke="#e8e8ff" stroke-width="1"/><path d="M8,4.5 Q10,6.5 8,8.5 M8.5,1.5 Q12.5,6.5 8.5,11.5 M10.5,0 Q15.5,6.5 10.5,13" stroke="#5a5a5a" stroke-width="1" fill="none"/></svg>
<div class="t" style="left:63px;top:483.76px;font-size:12.1px;color:#000;font-weight:normal;">Q2 Bach, Carsten Dahl</div>
<svg class="a" style="left:44px;top:497px" width="12" height="16" viewBox="0 0 12 16"><rect x="0" y="0" width="12" height="16" fill="#c4c4c4"/><path d="M2.5,1 V16 M9.5,1 V16" stroke="#777" stroke-dasharray="1,2"/><path d="M5.5,0 V16" stroke="#111" stroke-width="1.3"/><rect x="2" y="6" width="7.5" height="4" rx="2" fill="#6a6a6a"/></svg>
<div class="t" style="left:63px;top:499.76px;font-size:12.1px;color:#000;font-weight:normal;">Q34 Change level/pan of</div>
<svg class="a" style="left:44px;top:513px" width="12" height="16" viewBox="0 0 12 16"><rect x="0" y="0" width="12" height="16" fill="#c4c4c4"/><path d="M2.5,1 V16 M9.5,1 V16" stroke="#777" stroke-dasharray="1,2"/><path d="M5.5,0 V16" stroke="#111" stroke-width="1.3"/><rect x="2" y="6" width="7.5" height="4" rx="2" fill="#6a6a6a"/></svg>
<div class="t" style="left:63px;top:515.76px;font-size:12.1px;color:#000;font-weight:normal;">Q35 Change level/pan of</div>
<svg class="a" style="left:44px;top:529px" width="12" height="16" viewBox="0 0 12 16"><rect x="0" y="0" width="12" height="16" fill="#c4c4c4"/><path d="M2.5,1 V16 M9.5,1 V16" stroke="#777" stroke-dasharray="1,2"/><path d="M5.5,0 V16" stroke="#111" stroke-width="1.3"/><rect x="2" y="6" width="7.5" height="4" rx="2" fill="#6a6a6a"/></svg>
<div class="t" style="left:63px;top:531.76px;font-size:12.1px;color:#000;font-weight:normal;">Q39 Op i restauranten Allegro</div>
<svg class="a" style="left:44px;top:545px" width="12" height="16" viewBox="0 0 12 16"><rect x="0" y="0" width="12" height="16" fill="#c4c4c4"/><path d="M2.5,1 V16 M9.5,1 V16" stroke="#777" stroke-dasharray="1,2"/><path d="M5.5,0 V16" stroke="#111" stroke-width="1.3"/><rect x="2" y="6" width="7.5" height="4" rx="2" fill="#6a6a6a"/></svg>
<div class="t" style="left:63px;top:547.76px;font-size:12.1px;color:#000;font-weight:normal;">Q37 Change level/pan of</div>
<svg class="a" style="left:44px;top:561px" width="12" height="16" viewBox="0 0 12 16"><rect x="0" y="0" width="12" height="16" fill="#c4c4c4"/><path d="M2.5,1 V16 M9.5,1 V16" stroke="#777" stroke-dasharray="1,2"/><path d="M5.5,0 V16" stroke="#111" stroke-width="1.3"/><rect x="2" y="6" width="7.5" height="4" rx="2" fill="#6a6a6a"/></svg>
<div class="t" style="left:63px;top:563.76px;font-size:12.1px;color:#000;font-weight:normal;">Q38 Change level/pan of</div>
</div>
<div class="a" style="left:228px;top:95px;width:663px;height:613px;background:#f0f0f0"></div>
<div class="a" style="left:228px;top:95px;width:663px;height:1px;background:#646464"></div>
<div class="a" style="left:228px;top:95px;width:1px;height:107px;background:#646464"></div>
<div class="a" style="left:229px;top:96px;width:642px;height:18px;background:#fff"></div>
<div class="t" style="left:232.5px;top:98.62px;font-size:12.5px;color:#000;font-weight:normal;">Cue Properties</div>
<div class="a" style="left:229px;top:114px;width:642px;height:88px;background:#000"></div>
<div class="a" style="left:870px;top:96px;width:2px;height:106px;background:#000"></div>
<div class="a" style="left:872px;top:96px;width:17px;height:106px;background:#f0f0f0"></div>
<div class="a" style="left:889px;top:95px;width:1px;height:107px;background:#646464"></div>
<div class="a" style="left:872px;top:201px;width:18px;height:1px;background:#646464"></div>
<div class="a" style="left:873px;top:113px;width:15px;height:45px;background:#cdcdcd"></div>
<svg class="a" style="left:876px;top:101px" width="10" height="7" viewBox="0 0 10 7"><path d="M1.5,5.5 L4.8,2 L8.1,5.5" stroke="#505050" stroke-width="2" fill="none"/></svg>
<svg class="a" style="left:876px;top:189px" width="10" height="7" viewBox="0 0 10 7"><path d="M1.5,1.5 L4.8,5 L8.1,1.5" stroke="#505050" stroke-width="2" fill="none"/></svg>
<div class="a" style="left:638px;top:97px;width:13px;height:13px;background:linear-gradient(135deg,#c8ccd8,#f0f0f4);border:1px solid #8c8c8c"></div>
<svg class="a" style="left:638px;top:97px" width="13" height="13" viewBox="0 0 13 13"><path d="M3,6.5 L5.5,10 L10,2.5" stroke="#3c4c8c" stroke-width="2" fill="none"/></svg>
<div class="t" style="left:654px;top:99.11px;font-size:10.5px;color:#000;font-weight:normal;">Cue Enabled</div>
<div class="t" style="left:246.5px;top:119.08px;font-size:16.8px;color:#fff;font-weight:normal;">Cue</div>
<div class="a" style="left:283px;top:114px;width:70px;height:25px;background:#fff;border:1px solid #7a7a7a"></div>
<div class="t" style="left:285.5px;top:118.61px;font-size:17px;color:#000;font-weight:normal;">Q6</div>
<div class="t" style="left:253.5px;top:145.11px;font-size:10.5px;color:#fff;font-weight:normal;">Page</div>
<div class="a" style="left:283px;top:140px;width:45px;height:21px;background:#fff;border:1px solid #7a7a7a"></div>
<div class="t" style="left:240px;top:166.69px;font-size:11px;color:#fff;font-weight:normal;">Activation (how the cue is started)</div>
<div class="a" style="left:236px;top:180px;width:117px;height:21px;background:#e5f1fb;border:1px solid #0078d7"></div>
<div class="t" style="left:239.5px;top:186.11px;font-size:10.5px;color:#000;font-weight:normal;">Manual (Go Button)</div>
<svg class="a" style="left:337px;top:187px" width="10" height="6" viewBox="0 0 10 6"><path d="M1,1 L5,5 L9,1" stroke="#444" stroke-width="1" fill="none"/></svg>
<div class="t" style="left:139px;width:300px;text-align:right;top:118.61px;font-size:10.5px;color:#fff;font-weight:normal;">Description</div>
<div class="a" style="left:444px;top:114px;width:303px;height:21px;background:#fff;border:1px solid #7a7a7a"></div>
<div class="t" style="left:446.5px;top:117.84px;font-size:12px;color:#000;font-weight:bold;">MIDI Send</div>
<div class="t" style="left:139px;width:300px;text-align:right;top:141.11px;font-size:10.5px;color:#fff;font-weight:normal;">When Required</div>
<div class="a" style="left:444px;top:136px;width:303px;height:21px;background:#fff;border:1px solid #7a7a7a"></div>
<div class="t" style="left:345px;width:300px;text-align:right;top:163.11px;font-size:10.5px;color:#fff;font-weight:normal;">Display/Hide Cue</div>
<div class="a" style="left:649px;top:159px;width:98px;height:20px;background:#e1e1e1;border:1px solid #adadad"></div>
<div class="t" style="left:653px;top:163.61px;font-size:10.5px;color:#000;font-weight:normal;">Display Cue</div>
<svg class="a" style="left:733px;top:167px" width="10" height="6" viewBox="0 0 10 6"><path d="M1,1 L5,5 L9,1" stroke="#333" stroke-width="1.3" fill="none"/></svg>
<div class="a" style="left:761px;top:115px;width:13px;height:13px;background:linear-gradient(135deg,#c8c8c8,#f4f4f4);border:1px solid #8c8c8c"></div>
<div class="t" style="left:777px;top:117.11px;font-size:10.5px;color:#fff;font-weight:normal;">Exclusive Cue</div>
<div class="a" style="left:228px;top:202px;width:663px;height:7px;background:#f0f0f0"></div>
<div class="a" style="left:228px;top:206px;width:663px;height:1px;background:#7a7a7a"></div>
<div class="a" style="left:228px;top:209px;width:661px;height:499px;background:#dcef00;border-left:1px solid #646464"></div>
<div class="a" style="left:889px;top:209px;width:1px;height:499px;background:#646464"></div>
<div class="a" style="left:890px;top:95px;width:1px;height:613px;background:#f4f4f4"></div>
<div class="a" style="left:229px;top:209px;width:641px;height:18px;background:#000"></div>
<div class="t" style="left:232.5px;top:211.54px;font-size:12px;color:#dcef00;font-weight:bold;letter-spacing:0.72px">Sub-Cue Q6 &lt;1&gt; : Control Send</div>
<div class="a" style="left:638px;top:210px;width:13px;height:13px;background:linear-gradient(135deg,#c8ccd8,#f0f0f4);border:1px solid #8c8c8c"></div>
<svg class="a" style="left:638px;top:210px" width="13" height="13" viewBox="0 0 13 13"><path d="M3,6.5 L5.5,10 L10,2.5" stroke="#3c4c8c" stroke-width="2" fill="none"/></svg>
<div class="t" style="left:654px;top:212.61px;font-size:10.5px;color:#dcef00;font-weight:normal;">Sub-Cue Enabled</div>
<div class="t" style="left:233.5px;top:234.61px;font-size:10.5px;color:#000;font-weight:normal;">Description</div>
<div class="a" style="left:292px;top:230px;width:236px;height:21px;background:#fff;border:1px solid #7a7a7a"></div>
<div class="t" style="left:297.5px;top:234.61px;font-size:10.5px;color:#000;font-weight:normal;">MIDI Send</div>
<div class="a" style="left:533px;top:231px;width:96px;height:20px;background:#e1e1e1;border:1px solid #a9ab86"></div>
<div class="t" style="left:536.5px;top:235.61px;font-size:10.5px;color:#000;font-weight:normal;">Rel. Start Time</div>
<svg class="a" style="left:616px;top:239px" width="10" height="6" viewBox="0 0 10 6"><path d="M1,1 L5,5 L9,1" stroke="#333" stroke-width="1.3" fill="none"/></svg>
<div class="a" style="left:630px;top:231px;width:62px;height:20px;background:#fff;border:1px solid #7a7a7a"></div>
<div class="a" style="left:691px;top:231px;width:177px;height:20px;background:#e1e1e1;border:1px solid #a9ab86"></div>
<svg class="a" style="left:854px;top:239px" width="10" height="6" viewBox="0 0 10 6"><path d="M1,1 L5,5 L9,1" stroke="#333" stroke-width="1.3" fill="none"/></svg>
<div class="a" style="left:251px;top:254px;width:280px;height:185px;background:#fff;border:1px solid #a0a0a0"></div>
<div class="a" style="left:512px;top:255px;width:18px;height:183px;background:#f0f0f0"></div>
<div class="a" style="left:513px;top:274px;width:16px;height:41px;background:#cdcdcd"></div>
<svg class="a" style="left:515px;top:261px" width="11" height="7" viewBox="0 0 11 7"><path d="M1,6 L5.5,1.5 L10,6" stroke="#606060" stroke-width="1.4" fill="none"/></svg>
<svg class="a" style="left:515px;top:424px" width="11" height="7" viewBox="0 0 11 7"><path d="M1,1 L5.5,5.5 L10,1" stroke="#606060" stroke-width="1.4" fill="none"/></svg>
<div class="a" style="left:277px;top:256px;width:1px;height:182px;background:#f0f0f0"></div>
<div class="t" style="left:259px;top:264.11px;font-size:10.5px;color:#000;font-weight:normal;">#</div>
<div class="t" style="left:283.5px;top:264.11px;font-size:10.5px;color:#000;font-weight:normal;">Control Message</div>
<div class="a" style="left:257px;top:281px;width:255px;height:17px;background:#ebebeb"></div>
<div class="a" style="left:252px;top:298px;width:260px;height:1px;background:#ececec"></div>
<div class="a" style="left:252px;top:315px;width:260px;height:1px;background:#ececec"></div>
<div class="a" style="left:252px;top:332px;width:260px;height:1px;background:#ececec"></div>
<div class="a" style="left:252px;top:349px;width:260px;height:1px;background:#ececec"></div>
<div class="a" style="left:252px;top:365px;width:260px;height:1px;background:#ececec"></div>
<div class="a" style="left:252px;top:382px;width:260px;height:1px;background:#ececec"></div>
<div class="a" style="left:252px;top:399px;width:260px;height:1px;background:#ececec"></div>
<div class="a" style="left:252px;top:416px;width:260px;height:1px;background:#ececec"></div>
<div class="a" style="left:252px;top:433px;width:260px;height:1px;background:#ececec"></div>
<div class="t" style="left:259px;top:285.11px;font-size:10.5px;color:#000;font-weight:normal;">1</div>
<div class="t" style="left:259px;top:302.11px;font-size:10.5px;color:#000;font-weight:normal;">2</div>
<div class="t" style="left:259px;top:319.11px;font-size:10.5px;color:#000;font-weight:normal;">3</div>
<div class="t" style="left:259px;top:336.11px;font-size:10.5px;color:#000;font-weight:normal;">4</div>
<div class="t" style="left:259px;top:353.11px;font-size:10.5px;color:#000;font-weight:normal;">5</div>
<div class="t" style="left:259px;top:369.11px;font-size:10.5px;color:#000;font-weight:normal;">6</div>
<div class="t" style="left:259px;top:386.11px;font-size:10.5px;color:#000;font-weight:normal;">7</div>
<div class="t" style="left:259px;top:403.11px;font-size:10.5px;color:#000;font-weight:normal;">8</div>
<div class="t" style="left:259px;top:420.11px;font-size:10.5px;color:#000;font-weight:normal;">9</div>
<div class="t" style="left:283.5px;top:285.11px;font-size:10.5px;color:#000;font-weight:normal;">MSC  Dev 01H  Fmt 00H  Cmd 00H</div>
<div class="a" style="left:231px;top:280px;width:18px;height:80px;background:#f0f0f0"></div>
<div class="a" style="left:231px;top:281px;width:18px;height:18px;background:#cccccc;border:1px solid #bfbfbf"></div>
<div class="a" style="left:231px;top:301px;width:18px;height:18px;background:#cccccc;border:1px solid #bfbfbf"></div>
<div class="a" style="left:231px;top:321px;width:18px;height:18px;background:#e1e1e1;border:1px solid #adadad"></div>
<div class="a" style="left:231px;top:341px;width:18px;height:18px;background:#cccccc;border:1px solid #bfbfbf"></div>
<svg class="a" style="left:234px;top:284px" width="12" height="12" viewBox="0 0 12 12"><path d="M6,2 L10,6 H7.5 V10 H4.5 V6 H2 Z" fill="#9c9c9c"/></svg>
<svg class="a" style="left:234px;top:304px" width="12" height="12" viewBox="0 0 12 12"><path d="M6,10 L10,6 H7.5 V2 H4.5 V6 H2 Z" fill="#9c9c9c"/></svg>
<svg class="a" style="left:234px;top:324px" width="12" height="12" viewBox="0 0 12 12"><path d="M2,6 H10 M6,2 V10" stroke="#000" stroke-width="2"/></svg>
<svg class="a" style="left:234px;top:344px" width="12" height="12" viewBox="0 0 12 12"><path d="M2,6 H10" stroke="#9c9c9c" stroke-width="2"/></svg>
<div class="t" style="left:343.5px;width:300px;text-align:right;top:267.11px;font-size:10.5px;color:#000;font-weight:normal;">Device</div>
<div class="a" style="left:649px;top:261px;width:150px;height:21px;background:#e1e1e1;border:1px solid #a9ab86"></div>
<div class="t" style="left:653px;top:266.11px;font-size:10.5px;color:#000;font-weight:normal;">GrandMA</div>
<svg class="a" style="left:785px;top:269px" width="10" height="6" viewBox="0 0 10 6"><path d="M1,1 L5,5 L9,1" stroke="#333" stroke-width="1.3" fill="none"/></svg>
<div class="t" style="left:343.5px;width:300px;text-align:right;top:289.77px;font-size:10.9px;color:#000;font-weight:normal;">Item Description</div>
<div class="a" style="left:649px;top:284px;width:70px;height:21px;background:#fff;border:1px solid #7a7a7a"></div>
<div class="t" style="left:343.5px;width:300px;text-align:right;top:313.11px;font-size:10.5px;color:#000;font-weight:normal;">Remote Device</div>
<div class="a" style="left:649px;top:307px;width:154px;height:21px;background:#cccccc;border:1px solid #bfbfbf"></div>
<div class="t" style="left:653px;top:312.11px;font-size:10.5px;color:#838383;font-weight:normal;">Any Device or Product</div>
<svg class="a" style="left:789px;top:315px" width="10" height="6" viewBox="0 0 10 6"><path d="M1,1 L5,5 L9,1" stroke="#a0a0a0" stroke-width="1.3" fill="none"/></svg>
<div class="t" style="left:343.5px;width:300px;text-align:right;top:336.11px;font-size:10.5px;color:#000;font-weight:normal;">Message Type</div>
<div class="a" style="left:649px;top:330px;width:180px;height:21px;background:#e1e1e1;border:1px solid #a9ab86"></div>
<div class="t" style="left:653px;top:335.11px;font-size:10.5px;color:#000;font-weight:normal;">MIDI Show Control (MSC)</div>
<svg class="a" style="left:815px;top:338px" width="10" height="6" viewBox="0 0 10 6"><path d="M1,1 L5,5 L9,1" stroke="#333" stroke-width="1.3" fill="none"/></svg>
<div class="t" style="left:343.5px;width:300px;text-align:right;top:359.11px;font-size:10.5px;color:#000;font-weight:normal;">Device Id</div>
<div class="a" style="left:649px;top:353px;width:80px;height:21px;background:#fff;border:1px solid #7c7d68"></div>
<div class="t" style="left:654.5px;top:358.11px;font-size:10.5px;color:#000;font-weight:normal;">01H  1</div>
<svg class="a" style="left:715px;top:361px" width="10" height="6" viewBox="0 0 10 6"><path d="M1,1 L5,5 L9,1" stroke="#333" stroke-width="1.3" fill="none"/></svg>
<div class="t" style="left:343.5px;width:300px;text-align:right;top:380.11px;font-size:10.5px;color:#000;font-weight:normal;">Command Format</div>
<div class="a" style="left:649px;top:374px;width:190px;height:21px;background:#fff;border:1px solid #7c7d68"></div>
<div class="t" style="left:654.5px;top:379.11px;font-size:10.5px;color:#000;font-weight:normal;">01H  LIGHTING (GENERAL)</div>
<svg class="a" style="left:825px;top:382px" width="10" height="6" viewBox="0 0 10 6"><path d="M1,1 L5,5 L9,1" stroke="#333" stroke-width="1.3" fill="none"/></svg>
<div class="t" style="left:343.5px;width:300px;text-align:right;top:401.11px;font-size:10.5px;color:#000;font-weight:normal;">Command</div>
<div class="a" style="left:649px;top:395px;width:190px;height:21px;background:#fff;border:1px solid #7c7d68"></div>
<div class="t" style="left:654.5px;top:400.11px;font-size:10.5px;color:#000;font-weight:normal;">01H  GO</div>
<svg class="a" style="left:825px;top:403px" width="10" height="6" viewBox="0 0 10 6"><path d="M1,1 L5,5 L9,1" stroke="#333" stroke-width="1.3" fill="none"/></svg>
<div class="t" style="left:288.5px;top:561.61px;font-size:10.5px;color:#000;font-weight:normal;">Message (Hex)</div>
<div class="a" style="left:366px;top:557px;width:505px;height:20px;background:#f0f0f0;border:1px solid #8a8a8a"></div>
<div class="t" style="left:371px;top:562.11px;font-size:10.5px;color:#000;font-weight:normal;">F0 7F 01 02 00 00 F7</div>
<div class="a" style="left:243px;top:598px;width:605px;height:102px;background:#808080"></div>
<div class="a" style="left:286px;top:611px;width:250px;height:23px;background:#e1e1e1;border:1px solid #f4f4f4;box-shadow:inset 0 0 0 1px #a8a8a8"></div>
<div class="t" style="left:211px;width:400px;text-align:center;top:617.36px;font-size:10.8px;color:#000;font-weight:normal;">Test Control Send (selected message only)</div>
<div class="a" style="left:553px;top:611px;width:250px;height:23px;background:#e1e1e1;border:1px solid #f4f4f4;box-shadow:inset 0 0 0 1px #a8a8a8"></div>
<div class="t" style="left:478px;width:400px;text-align:center;top:617.36px;font-size:10.8px;color:#000;font-weight:normal;">Test Control Send (all messages)</div>
<div class="a" style="left:228px;top:708px;width:663px;height:4px;background:#4a4546"></div>
<div class="a" style="left:542px;top:708px;width:226px;height:4px;background:#fffde1"></div>
<div class="a" style="left:542px;top:709px;width:226px;height:3px;overflow:hidden"><div class="t" style="left:68px;top:-1.2px;font-size:13.5px;color:#505050">Roadie Tutorial</div></div>
</body></html>
